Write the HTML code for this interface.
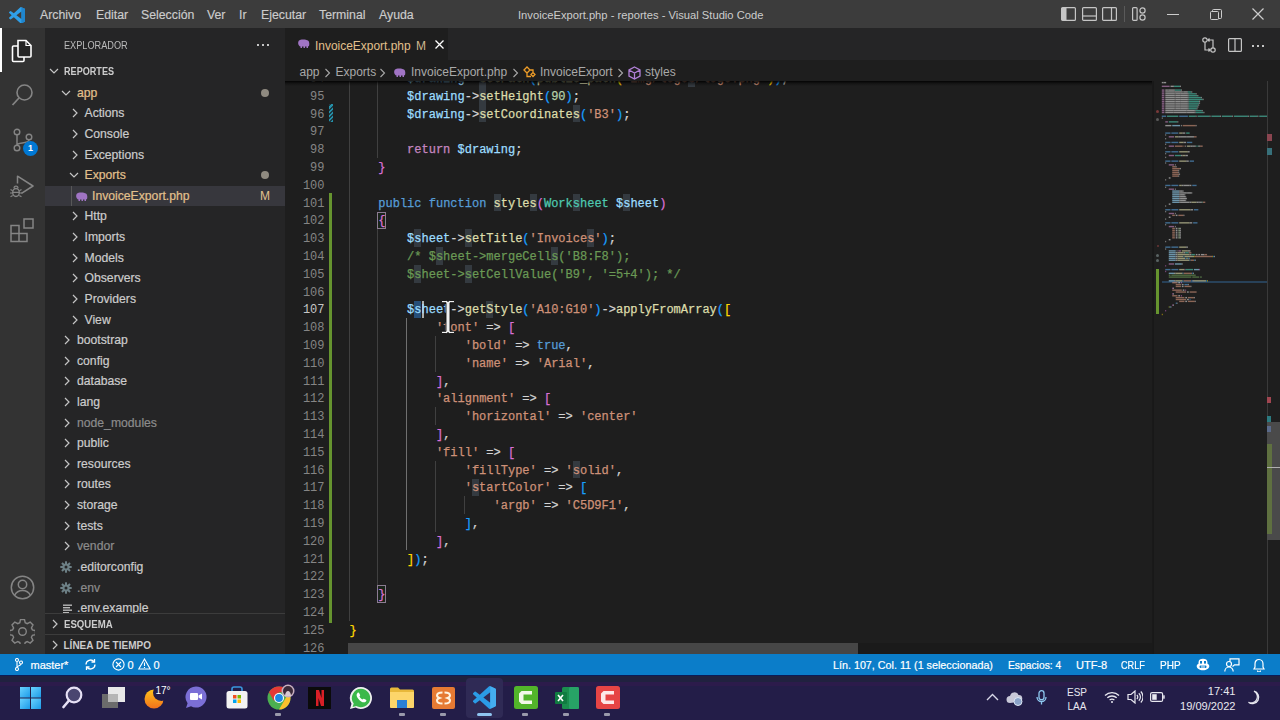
<!DOCTYPE html>
<html><head><meta charset="utf-8">
<style>
*{margin:0;padding:0;box-sizing:border-box}
html,body{width:1280px;height:720px;overflow:hidden;background:#1e1e1e;font-family:"Liberation Sans",sans-serif;color:#cccccc}
.abs{position:absolute}
svg{display:block}
#title{position:absolute;left:0;top:0;width:1280px;height:28px;background:#3c3c3c}
#title .m{position:absolute;top:1px;height:28px;line-height:28px;font-size:12.3px;color:#cccccc;-webkit-text-stroke:0.15px currentColor}
#title .tt{position:absolute;top:1px;height:28px;line-height:28px;font-size:11.2px;color:#cccccc;left:518px}
#act{position:absolute;left:0;top:28px;width:45px;height:626px;background:#333333}
#side{position:absolute;left:45px;top:28px;width:240px;height:626px;background:#252526;overflow:hidden}
.row{position:absolute;left:0;width:240px;height:20.57px}
.row.sel{background:#37373d}
.rt{position:absolute;top:0;line-height:20.57px;font-size:12.2px;color:#cccccc;white-space:nowrap;-webkit-text-stroke:0.2px currentColor}
.rt.mod{color:#e2c08d}
.rt.ign{color:#8c8c8c}
.ico{position:absolute}
.iguide{position:absolute;top:0;width:1px;height:20.57px;background:#585858}
.mdot{position:absolute;left:216px;top:6.3px;width:8px;height:8px;border-radius:50%;background:#8f8a80}
.mbadge{position:absolute;left:215px;top:0;line-height:20.57px;font-size:12px;color:#e2c08d}
#editor{position:absolute;left:285px;top:28px;width:995px;height:626px;background:#1e1e1e}
#tabs{position:absolute;left:0;top:0;width:995px;height:32px;background:#252526}
#tab{position:absolute;left:0;top:0;width:163px;height:32px;background:#1e1e1e}
#crumbs{position:absolute;left:0;top:33.5px;width:995px;height:21px;font-size:12px;color:#a9a9a9}
#code{position:absolute;left:0;top:53px;width:868px;height:573px;overflow:hidden}
.ln{position:absolute;left:64.5px;height:17.8px;line-height:17.8px;font-family:"Liberation Mono",monospace;font-size:12px;white-space:pre;color:#d4d4d4;-webkit-text-stroke:0.25px currentColor}
.num{position:absolute;left:0;width:39.5px;text-align:right;height:17.8px;line-height:17.8px;font-family:"Liberation Mono",monospace;font-size:12px;color:#858585}
.num.act{color:#c6c6c6}
.v{color:#9cdcfe}.o{color:#d4d4d4}.f{color:#dcdcaa}.s{color:#ce9178}.n{color:#b5cea8}.k{color:#c586c0}.b{color:#569cd6}.t{color:#4ec9b0}.c{color:#6a9955}
.p1{color:#ffd700}.p2{color:#da70d6}.p3{color:#179fff}
.guide{position:absolute;width:1px;background:#404040}
.hl{position:absolute;width:7.2px;height:17.8px;background:#343a40}
.selx{position:absolute;width:7.2px;height:17.8px;background:#264f78}
.bm{position:absolute;width:8.5px;height:17.8px;border:1px solid #8c7c92;background:#0064001a}
.cur{position:absolute;width:2px;height:17.8px;background:#aeafad}
.gact{background:#707070}
#status{position:absolute;left:0;top:654px;width:1280px;height:21px;background:#0b7dc9;color:#ffffff;font-size:11px}
#status .si{position:absolute;top:0.5px;line-height:21px;white-space:nowrap;-webkit-text-stroke:0.2px #fff}
#taskbar{position:absolute;left:0;top:675px;width:1280px;height:45px;background:#231d48}
</style></head><body>

<div id="title">
  <svg class="abs" style="left:8.5px;top:6.5px" width="16.5" height="16.5" viewBox="0 0 24 24"><path d="M23.15 2.587L18.21.21a1.494 1.494 0 0 0-1.705.29l-9.46 8.63-4.12-3.128a.999.999 0 0 0-1.276.057L.327 7.261A1 1 0 0 0 .326 8.74L3.899 12 .326 15.26a1 1 0 0 0 .001 1.479L1.65 17.94a.999.999 0 0 0 1.276.057l4.12-3.128 9.46 8.63a1.492 1.492 0 0 0 1.704.29l4.942-2.377A1.5 1.5 0 0 0 24 20.06V3.939a1.5 1.5 0 0 0-.85-1.352zm-5.146 14.861L10.826 12l7.178-5.448v10.896z" fill="#2f9fe8"/><path d="M18.004 0.3l5.146 2.287A1.5 1.5 0 0 1 24 3.939V20.06a1.5 1.5 0 0 1-.85 1.353l-5.146 2.287z" fill="#1b7cc4" opacity="0.75"/></svg>
  <div class="m" style="left:40px">Archivo</div>
  <div class="m" style="left:96px">Editar</div>
  <div class="m" style="left:141px">Selección</div>
  <div class="m" style="left:207px">Ver</div>
  <div class="m" style="left:239px">Ir</div>
  <div class="m" style="left:261px">Ejecutar</div>
  <div class="m" style="left:319px">Terminal</div>
  <div class="m" style="left:379px">Ayuda</div>
  <div class="tt">InvoiceExport.php - reportes - Visual Studio Code</div>
  <!-- layout icons -->
  <svg class="abs" style="left:1061px;top:7px" width="15" height="14" viewBox="0 0 15 14"><rect x="0.6" y="0.6" width="13.8" height="12.8" rx="1" fill="none" stroke="#c5c5c5" stroke-width="1.2"/><rect x="1" y="1" width="4.5" height="12" fill="#c5c5c5"/></svg>
  <svg class="abs" style="left:1082px;top:7px" width="15" height="14" viewBox="0 0 15 14"><rect x="0.6" y="0.6" width="13.8" height="12.8" rx="1" fill="none" stroke="#c5c5c5" stroke-width="1.2"/><line x1="1" y1="9" x2="14" y2="9" stroke="#c5c5c5" stroke-width="1.2"/></svg>
  <svg class="abs" style="left:1102px;top:7px" width="15" height="14" viewBox="0 0 15 14"><rect x="0.6" y="0.6" width="13.8" height="12.8" rx="1" fill="none" stroke="#c5c5c5" stroke-width="1.2"/><line x1="9.5" y1="1" x2="9.5" y2="13" stroke="#c5c5c5" stroke-width="1.2"/></svg>
  <div class="abs" style="left:1124px;top:6px;width:1px;height:16px;background:#5a5a5a"></div>
  <svg class="abs" style="left:1132px;top:7px" width="15" height="14" viewBox="0 0 15 14"><rect x="0.6" y="0.6" width="4.5" height="12.8" rx="1" fill="none" stroke="#c5c5c5" stroke-width="1.2"/><circle cx="10.5" cy="3.5" r="2.6" fill="none" stroke="#c5c5c5" stroke-width="1.2"/><circle cx="10.5" cy="10.5" r="2.6" fill="none" stroke="#c5c5c5" stroke-width="1.2"/></svg>
  <div class="abs" style="left:1167px;top:14px;width:12px;height:1px;background:#cccccc"></div>
  <svg class="abs" style="left:1210px;top:9px" width="12" height="11" viewBox="0 0 12 11"><rect x="0.5" y="2.5" width="8" height="8" rx="1" fill="none" stroke="#cccccc"/><path d="M2.5 2.5V1.5a1 1 0 0 1 1-1h7a1 1 0 0 1 1 1v7a1 1 0 0 1-1 1h-2" fill="none" stroke="#cccccc"/></svg>
  <svg class="abs" style="left:1252px;top:8px" width="12" height="12" viewBox="0 0 12 12"><path d="M0.5 0.5L11.5 11.5M11.5 0.5L0.5 11.5" stroke="#cccccc" stroke-width="1.2"/></svg>
</div>

<div id="act">
  <div class="abs" style="left:0;top:0;width:2px;height:44px;background:#ffffff"></div>
  <!-- explorer -->
  <svg class="abs" style="left:11px;top:11px" width="22" height="24" viewBox="0 0 22 24"><path d="M7 7H2.5a1 1 0 0 0-1 1v13.5a1 1 0 0 0 1 1H12a1 1 0 0 0 1-1V18" fill="#282828" stroke="#ffffff" stroke-width="1.6"/><path d="M7 1.5h8l5 5V17a1 1 0 0 1-1 1H8a1 1 0 0 1-1-1z" fill="#262626" stroke="#ffffff" stroke-width="1.6"/><path d="M15 1.5V6.5h5" fill="none" stroke="#ffffff" stroke-width="1.2"/></svg>
  <!-- search -->
  <svg class="abs" style="left:11px;top:55px" width="23" height="24" viewBox="0 0 23 24"><circle cx="13.5" cy="9.5" r="7.5" fill="none" stroke="#858585" stroke-width="1.6"/><path d="M8 15L1.5 22" stroke="#858585" stroke-width="1.8"/></svg>
  <!-- scm -->
  <svg class="abs" style="left:12px;top:100px" width="22" height="24" viewBox="0 0 22 24"><circle cx="5" cy="4" r="2.8" fill="none" stroke="#858585" stroke-width="1.4"/><circle cx="5" cy="20" r="2.8" fill="none" stroke="#858585" stroke-width="1.4"/><circle cx="17" cy="9" r="2.8" fill="none" stroke="#858585" stroke-width="1.4"/><path d="M5 7V17M17 12c0 4-12 2-12 5" fill="none" stroke="#858585" stroke-width="1.4"/></svg>
  <div class="abs" style="left:23px;top:113px;width:15px;height:15px;border-radius:50%;background:#0078d4;color:#fff;font-size:9px;font-weight:bold;line-height:15px;text-align:center">1</div>
  <!-- run debug -->
  <svg class="abs" style="left:9px;top:146px" width="26" height="25" viewBox="0 0 26 25"><path d="M8.5 9.5V2.2L24 12L12.5 19.3" fill="none" stroke="#858585" stroke-width="1.5" stroke-linejoin="round"/><ellipse cx="7" cy="18.5" rx="3.3" ry="4" fill="none" stroke="#858585" stroke-width="1.4"/><path d="M5 14.2a2 2 0 0 1 4 0M1.5 15.5l2.2 1.2M12.5 15.5l-2.2 1.2M1 19h2.7M13 19h-2.7M1.5 22.8l2.2-1.3M12.5 22.8l-2.2-1.3M3.8 18.3h6.4" fill="none" stroke="#858585" stroke-width="1.2"/></svg>
  <!-- extensions -->
  <svg class="abs" style="left:10px;top:190px" width="24" height="25" viewBox="0 0 24 25"><path d="M1 7.5h8v16H1zM1 15.5h16v8H9" fill="none" stroke="#858585" stroke-width="1.5"/><rect x="14" y="1" width="9" height="9" fill="none" stroke="#858585" stroke-width="1.5"/></svg>
  <!-- account -->
  <svg class="abs" style="left:10px;top:547px" width="25" height="25" viewBox="0 0 25 25"><circle cx="12.5" cy="12.5" r="11.2" fill="none" stroke="#858585" stroke-width="1.5"/><circle cx="12.5" cy="9.5" r="4.2" fill="none" stroke="#858585" stroke-width="1.5"/><path d="M4.5 20.5c2-4 4.5-5 8-5s6 1 8 5" fill="none" stroke="#858585" stroke-width="1.5"/></svg>
  <!-- settings -->
  <svg class="abs" style="left:10px;top:591px" width="25" height="25" viewBox="0 0 25 25"><path d="M10.5 1.5h4l.7 3.2 2 1 3-1.6 2.8 2.8-1.6 3 1 2 3.1.7v4l-3.1.7-1 2 1.6 3-2.8 2.8-3-1.6-2 1-.7 3.1h-4l-.7-3.1-2-1-3 1.6-2.8-2.8 1.6-3-1-2-3.2-.7v-4l3.2-.7 1-2-1.6-3 2.8-2.8 3 1.6 2-1z" fill="none" stroke="#858585" stroke-width="1.4" transform="translate(0 -1)"/><circle cx="12.5" cy="12.5" r="3.8" fill="none" stroke="#858585" stroke-width="1.4"/></svg>
</div>

<div id="side">
  <div class="abs" style="left:19px;top:0.7px;height:34px;line-height:34px;font-size:10px;color:#bbbbbb;transform:scaleX(0.917);transform-origin:left">EXPLORADOR</div>
  <div class="abs" style="left:212px;top:16px;width:2px;height:2px;background:#c5c5c5;box-shadow:5px 0 #c5c5c5,10px 0 #c5c5c5"></div>
  <svg class="abs" style="left:4px;top:39px" width="10" height="8" viewBox="0 0 10 8"><path d="M1 2l4 4 4-4" fill="none" stroke="#c5c5c5" stroke-width="1.2"/></svg>
  <div class="abs" style="left:19px;top:33.5px;height:20px;line-height:20px;font-size:10px;font-weight:bold;color:#cccccc;transform:scaleX(0.909);transform-origin:left">REPORTES</div>
<div class="row" style="top:54.69px">
<div class="ico" style="left:16.0px;top:6px"><svg width="10" height="8" viewBox="0 0 10 8"><path d="M1 2l4 4 4-4" fill="none" stroke="#c5c5c5" stroke-width="1.2"/></svg></div>
<div class="rt mod" style="left:32.0px">app</div>
<div class="mdot"></div>
</div>
<div class="row" style="top:75.31px">
<div class="ico" style="left:25.5px;top:5px"><svg width="8" height="10" viewBox="0 0 8 10"><path d="M2 1l4 4-4 4" fill="none" stroke="#c5c5c5" stroke-width="1.2"/></svg></div>
<div class="rt " style="left:39.5px">Actions</div>
</div>
<div class="row" style="top:95.93px">
<div class="ico" style="left:25.5px;top:5px"><svg width="8" height="10" viewBox="0 0 8 10"><path d="M2 1l4 4-4 4" fill="none" stroke="#c5c5c5" stroke-width="1.2"/></svg></div>
<div class="rt " style="left:39.5px">Console</div>
</div>
<div class="row" style="top:116.55px">
<div class="ico" style="left:25.5px;top:5px"><svg width="8" height="10" viewBox="0 0 8 10"><path d="M2 1l4 4-4 4" fill="none" stroke="#c5c5c5" stroke-width="1.2"/></svg></div>
<div class="rt " style="left:39.5px">Exceptions</div>
</div>
<div class="row" style="top:137.17px">
<div class="ico" style="left:23.5px;top:6px"><svg width="10" height="8" viewBox="0 0 10 8"><path d="M1 2l4 4 4-4" fill="none" stroke="#c5c5c5" stroke-width="1.2"/></svg></div>
<div class="rt mod" style="left:39.5px">Exports</div>
<div class="mdot"></div>
</div>
<div class="row sel" style="top:157.79px">
<div class="ico" style="left:29.5px;top:6px"><svg width="13" height="9" viewBox="0 0 13 9"><path d="M2 1.5C3 0 9 0 11 1.5c1.5 1 1.5 4 1 5.5l-1 .5V9H9.5V7.5H8V9H6.5V7.5H5V9H3.5V7.5C1 7 .5 3 2 1.5z" fill="#a074c4"/></svg></div>
<div class="iguide" style="left:26px"></div>
<div class="rt mod" style="left:47.0px">InvoiceExport.php</div>
<div class="mbadge">M</div>
</div>
<div class="row" style="top:178.41px">
<div class="ico" style="left:25.5px;top:5px"><svg width="8" height="10" viewBox="0 0 8 10"><path d="M2 1l4 4-4 4" fill="none" stroke="#c5c5c5" stroke-width="1.2"/></svg></div>
<div class="rt " style="left:39.5px">Http</div>
</div>
<div class="row" style="top:199.03px">
<div class="ico" style="left:25.5px;top:5px"><svg width="8" height="10" viewBox="0 0 8 10"><path d="M2 1l4 4-4 4" fill="none" stroke="#c5c5c5" stroke-width="1.2"/></svg></div>
<div class="rt " style="left:39.5px">Imports</div>
</div>
<div class="row" style="top:219.65px">
<div class="ico" style="left:25.5px;top:5px"><svg width="8" height="10" viewBox="0 0 8 10"><path d="M2 1l4 4-4 4" fill="none" stroke="#c5c5c5" stroke-width="1.2"/></svg></div>
<div class="rt " style="left:39.5px">Models</div>
</div>
<div class="row" style="top:240.27px">
<div class="ico" style="left:25.5px;top:5px"><svg width="8" height="10" viewBox="0 0 8 10"><path d="M2 1l4 4-4 4" fill="none" stroke="#c5c5c5" stroke-width="1.2"/></svg></div>
<div class="rt " style="left:39.5px">Observers</div>
</div>
<div class="row" style="top:260.89px">
<div class="ico" style="left:25.5px;top:5px"><svg width="8" height="10" viewBox="0 0 8 10"><path d="M2 1l4 4-4 4" fill="none" stroke="#c5c5c5" stroke-width="1.2"/></svg></div>
<div class="rt " style="left:39.5px">Providers</div>
</div>
<div class="row" style="top:281.51px">
<div class="ico" style="left:25.5px;top:5px"><svg width="8" height="10" viewBox="0 0 8 10"><path d="M2 1l4 4-4 4" fill="none" stroke="#c5c5c5" stroke-width="1.2"/></svg></div>
<div class="rt " style="left:39.5px">View</div>
</div>
<div class="row" style="top:302.13px">
<div class="ico" style="left:18.0px;top:5px"><svg width="8" height="10" viewBox="0 0 8 10"><path d="M2 1l4 4-4 4" fill="none" stroke="#c5c5c5" stroke-width="1.2"/></svg></div>
<div class="rt " style="left:32.0px">bootstrap</div>
</div>
<div class="row" style="top:322.75px">
<div class="ico" style="left:18.0px;top:5px"><svg width="8" height="10" viewBox="0 0 8 10"><path d="M2 1l4 4-4 4" fill="none" stroke="#c5c5c5" stroke-width="1.2"/></svg></div>
<div class="rt " style="left:32.0px">config</div>
</div>
<div class="row" style="top:343.37px">
<div class="ico" style="left:18.0px;top:5px"><svg width="8" height="10" viewBox="0 0 8 10"><path d="M2 1l4 4-4 4" fill="none" stroke="#c5c5c5" stroke-width="1.2"/></svg></div>
<div class="rt " style="left:32.0px">database</div>
</div>
<div class="row" style="top:363.99px">
<div class="ico" style="left:18.0px;top:5px"><svg width="8" height="10" viewBox="0 0 8 10"><path d="M2 1l4 4-4 4" fill="none" stroke="#c5c5c5" stroke-width="1.2"/></svg></div>
<div class="rt " style="left:32.0px">lang</div>
</div>
<div class="row" style="top:384.61px">
<div class="ico" style="left:18.0px;top:5px"><svg width="8" height="10" viewBox="0 0 8 10"><path d="M2 1l4 4-4 4" fill="none" stroke="#c5c5c5" stroke-width="1.2"/></svg></div>
<div class="rt ign" style="left:32.0px">node_modules</div>
</div>
<div class="row" style="top:405.23px">
<div class="ico" style="left:18.0px;top:5px"><svg width="8" height="10" viewBox="0 0 8 10"><path d="M2 1l4 4-4 4" fill="none" stroke="#c5c5c5" stroke-width="1.2"/></svg></div>
<div class="rt " style="left:32.0px">public</div>
</div>
<div class="row" style="top:425.85px">
<div class="ico" style="left:18.0px;top:5px"><svg width="8" height="10" viewBox="0 0 8 10"><path d="M2 1l4 4-4 4" fill="none" stroke="#c5c5c5" stroke-width="1.2"/></svg></div>
<div class="rt " style="left:32.0px">resources</div>
</div>
<div class="row" style="top:446.47px">
<div class="ico" style="left:18.0px;top:5px"><svg width="8" height="10" viewBox="0 0 8 10"><path d="M2 1l4 4-4 4" fill="none" stroke="#c5c5c5" stroke-width="1.2"/></svg></div>
<div class="rt " style="left:32.0px">routes</div>
</div>
<div class="row" style="top:467.09px">
<div class="ico" style="left:18.0px;top:5px"><svg width="8" height="10" viewBox="0 0 8 10"><path d="M2 1l4 4-4 4" fill="none" stroke="#c5c5c5" stroke-width="1.2"/></svg></div>
<div class="rt " style="left:32.0px">storage</div>
</div>
<div class="row" style="top:487.71px">
<div class="ico" style="left:18.0px;top:5px"><svg width="8" height="10" viewBox="0 0 8 10"><path d="M2 1l4 4-4 4" fill="none" stroke="#c5c5c5" stroke-width="1.2"/></svg></div>
<div class="rt " style="left:32.0px">tests</div>
</div>
<div class="row" style="top:508.33px">
<div class="ico" style="left:18.0px;top:5px"><svg width="8" height="10" viewBox="0 0 8 10"><path d="M2 1l4 4-4 4" fill="none" stroke="#c5c5c5" stroke-width="1.2"/></svg></div>
<div class="rt ign" style="left:32.0px">vendor</div>
</div>
<div class="row" style="top:528.95px">
<div class="ico" style="left:14.5px;top:4.5px"><svg width="12" height="12" viewBox="0 0 12 12"><g fill="#6d8086"><circle cx="6" cy="6" r="3.6"/><rect x="5" y="0.3" width="2" height="11.4"/><rect x="0.3" y="5" width="11.4" height="2"/><rect x="5" y="0.3" width="2" height="11.4" transform="rotate(45 6 6)"/><rect x="5" y="0.3" width="2" height="11.4" transform="rotate(-45 6 6)"/></g><circle cx="6" cy="6" r="1.5" fill="#252526"/></svg></div>
<div class="rt " style="left:32.0px">.editorconfig</div>
</div>
<div class="row" style="top:549.57px">
<div class="ico" style="left:14.5px;top:4.5px"><svg width="12" height="12" viewBox="0 0 12 12"><g fill="#6d8086"><circle cx="6" cy="6" r="3.6"/><rect x="5" y="0.3" width="2" height="11.4"/><rect x="0.3" y="5" width="11.4" height="2"/><rect x="5" y="0.3" width="2" height="11.4" transform="rotate(45 6 6)"/><rect x="5" y="0.3" width="2" height="11.4" transform="rotate(-45 6 6)"/></g><circle cx="6" cy="6" r="1.5" fill="#252526"/></svg></div>
<div class="rt ign" style="left:32.0px">.env</div>
</div>
<div class="row" style="top:570.19px">
<div class="ico" style="left:18.0px;top:5.5px"><svg width="10" height="10" viewBox="0 0 10 10"><g fill="#b8b8b8"><rect x="0" y="0.5" width="9" height="1.4"/><rect x="0" y="3" width="7" height="1.4"/><rect x="0" y="5.5" width="9" height="1.4"/><rect x="0" y="8" width="6" height="1.4"/></g></svg></div>
<div class="rt " style="left:32.0px">.env.example</div>
</div>
  <div class="abs" style="left:0;top:585px;width:240px;height:21px;background:#252526;border-top:1px solid #3c3c3c"></div>
  <svg class="abs" style="left:6px;top:591px" width="8" height="10" viewBox="0 0 8 10"><path d="M2 1l4 4-4 4" fill="none" stroke="#c5c5c5" stroke-width="1.2"/></svg>
  <div class="abs" style="left:18.5px;top:587px;height:20px;line-height:20px;font-size:10px;font-weight:bold;color:#cccccc;transform:scaleX(0.963);transform-origin:left">ESQUEMA</div>
  <div class="abs" style="left:0;top:606px;width:240px;height:20px;background:#252526;border-top:1px solid #3c3c3c"></div>
  <svg class="abs" style="left:6px;top:612px" width="8" height="10" viewBox="0 0 8 10"><path d="M2 1l4 4-4 4" fill="none" stroke="#c5c5c5" stroke-width="1.2"/></svg>
  <div class="abs" style="left:18.5px;top:608px;height:20px;line-height:20px;font-size:10px;font-weight:bold;color:#cccccc">LÍNEA DE TIEMPO</div>
</div>

<div id="editor">
  <div id="tabs">
    <div id="tab">
      <svg class="abs" style="left:12px;top:11px" width="13" height="9" viewBox="0 0 13 9"><path d="M2 1.5C3 0 9 0 11 1.5c1.5 1 1.5 4 1 5.5l-1 .5V9H9.5V7.5H8V9H6.5V7.5H5V9H3.5V7.5C1 7 .5 3 2 1.5z" fill="#a074c4"/></svg>
      <div class="abs" style="left:30px;top:1.5px;line-height:32px;font-size:11.95px;color:#e2c08d">InvoiceExport.php</div>
      <div class="abs" style="left:131px;top:1.5px;line-height:32px;font-size:12px;color:#cdb78e">M</div>
      <svg class="abs" style="left:150px;top:12px" width="9" height="9" viewBox="0 0 9 9"><path d="M0.5 0.5L8.5 8.5M8.5 0.5L0.5 8.5" stroke="#ffffff" stroke-width="1.3"/></svg>
    </div>
    <!-- editor actions -->
    <svg class="abs" style="left:917px;top:9px" width="14" height="16" viewBox="0 0 14 16"><circle cx="3" cy="3" r="2.2" fill="none" stroke="#c5c5c5" stroke-width="1.2"/><circle cx="11" cy="13" r="2.2" fill="none" stroke="#c5c5c5" stroke-width="1.2"/><path d="M3 5.2V13h5M6.5 11.5L8 13l-1.5 1.5M11 10.8V3H6M7.5 1.5L6 3l1.5 1.5" fill="none" stroke="#c5c5c5" stroke-width="1.2"/></svg>
    <svg class="abs" style="left:943px;top:10px" width="14" height="14" viewBox="0 0 14 14"><rect x="0.6" y="0.6" width="12.8" height="12.8" rx="1" fill="none" stroke="#c5c5c5" stroke-width="1.2"/><line x1="7" y1="1" x2="7" y2="13" stroke="#c5c5c5" stroke-width="1.2"/></svg>
    <div class="abs" style="left:967px;top:17px;width:2px;height:2px;background:#c5c5c5;box-shadow:5px 0 #c5c5c5,10px 0 #c5c5c5"></div>
  </div>
  <div id="crumbs">
    <div class="abs" style="left:14.5px;top:0;line-height:21px">app</div>
    <svg class="abs" style="left:39px;top:6px" width="7" height="10" viewBox="0 0 7 10"><path d="M1.5 1l4 4-4 4" fill="none" stroke="#a9a9a9" stroke-width="1.1"/></svg>
    <div class="abs" style="left:50.5px;top:0;line-height:21px">Exports</div>
    <svg class="abs" style="left:94px;top:6px" width="7" height="10" viewBox="0 0 7 10"><path d="M1.5 1l4 4-4 4" fill="none" stroke="#a9a9a9" stroke-width="1.1"/></svg>
    <svg class="abs" style="left:108px;top:6px" width="13" height="9" viewBox="0 0 13 9"><path d="M2 1.5C3 0 9 0 11 1.5c1.5 1 1.5 4 1 5.5l-1 .5V9H9.5V7.5H8V9H6.5V7.5H5V9H3.5V7.5C1 7 .5 3 2 1.5z" fill="#a074c4"/></svg>
    <div class="abs" style="left:126px;top:0;line-height:21px">InvoiceExport.php</div>
    <svg class="abs" style="left:227px;top:6px" width="7" height="10" viewBox="0 0 7 10"><path d="M1.5 1l4 4-4 4" fill="none" stroke="#a9a9a9" stroke-width="1.1"/></svg>
    <svg class="abs" style="left:238px;top:4px" width="13" height="13" viewBox="0 0 13 13"><path d="M1 4l3-3 3 3-3 3zM8 8.5l2-2 2 2-2 2zM4 7v3.5h4M7 4h3v2.5" fill="none" stroke="#ee9d28" stroke-width="1.3"/></svg>
    <div class="abs" style="left:255px;top:0;line-height:21px">InvoiceExport</div>
    <svg class="abs" style="left:332px;top:6px" width="7" height="10" viewBox="0 0 7 10"><path d="M1.5 1l4 4-4 4" fill="none" stroke="#a9a9a9" stroke-width="1.1"/></svg>
    <svg class="abs" style="left:343px;top:4px" width="13" height="14" viewBox="0 0 13 14"><path d="M6.5 1L12 4v6l-5.5 3L1 10V4zM1 4l5.5 3L12 4M6.5 7v6" fill="none" stroke="#b180d7" stroke-width="1.3"/></svg>
    <div class="abs" style="left:360px;top:0;line-height:21px">styles</div>
  </div>
  <div id="code">
<div class="guide" style="left:63.5px;top:-11.9px;height:551.8px"></div>
<div class="guide" style="left:92.3px;top:-11.9px;height:89.0px"></div>
<div class="guide" style="left:92.3px;top:148.3px;height:356.0px"></div>
<div class="guide gact" style="left:121.1px;top:237.3px;height:231.4px"></div>
<div class="guide" style="left:149.9px;top:255.1px;height:35.6px"></div>
<div class="guide" style="left:149.9px;top:326.3px;height:17.8px"></div>
<div class="guide" style="left:149.9px;top:379.7px;height:71.2px"></div>
<div class="guide" style="left:178.7px;top:415.3px;height:17.8px"></div>
<div class="hl" style="left:194.10px;top:-11.90px"></div>
<div class="hl" style="left:402.90px;top:-11.90px"></div>
<div class="hl" style="left:194.10px;top:5.90px"></div>
<div class="hl" style="left:194.10px;top:23.70px"></div>
<div class="hl" style="left:287.70px;top:23.70px"></div>
<div class="hl" style="left:208.50px;top:112.70px"></div>
<div class="hl" style="left:244.50px;top:112.70px"></div>
<div class="hl" style="left:287.70px;top:112.70px"></div>
<div class="hl" style="left:338.10px;top:112.70px"></div>
<div class="hl" style="left:129.30px;top:148.30px"></div>
<div class="hl" style="left:179.70px;top:148.30px"></div>
<div class="hl" style="left:302.10px;top:148.30px"></div>
<div class="hl" style="left:150.90px;top:166.10px"></div>
<div class="hl" style="left:266.10px;top:166.10px"></div>
<div class="hl" style="left:129.30px;top:183.90px"></div>
<div class="hl" style="left:179.70px;top:183.90px"></div>
<div class="selx" style="left:129.30px;top:219.50px"></div>
<div class="hl" style="left:201.30px;top:219.50px"></div>
<div class="hl" style="left:287.70px;top:379.70px"></div>
<div class="hl" style="left:186.90px;top:397.50px"></div>
<div class="bm" style="left:92.30px;top:130.50px"></div>
<div class="bm" style="left:92.30px;top:504.30px"></div>
<div class="cur" style="left:136.50px;top:219.50px"></div>
<div class="ln" style="top:-10.00px">        <span class="v">$drawing</span><span class="o">-&gt;</span><span class="f">setPath</span><span class="p3">(</span><span class="f">public_path</span><span class="p1">(</span><span class="s">&#x27;img/logos/logo.png&#x27;</span><span class="p1">)</span><span class="p3">)</span><span class="o">;</span></div>
<div class="num" style="top:-10.00px">94</div>
<div class="ln" style="top:7.80px">        <span class="v">$drawing</span><span class="o">-&gt;</span><span class="f">setHeight</span><span class="p3">(</span><span class="n">90</span><span class="p3">)</span><span class="o">;</span></div>
<div class="num" style="top:7.80px">95</div>
<div class="ln" style="top:25.60px">        <span class="v">$drawing</span><span class="o">-&gt;</span><span class="f">setCoordinates</span><span class="p3">(</span><span class="s">&#x27;B3&#x27;</span><span class="p3">)</span><span class="o">;</span></div>
<div class="num" style="top:25.60px">96</div>
<div class="ln" style="top:43.40px"></div>
<div class="num" style="top:43.40px">97</div>
<div class="ln" style="top:61.20px">        <span class="k">return</span> <span class="v">$drawing</span><span class="o">;</span></div>
<div class="num" style="top:61.20px">98</div>
<div class="ln" style="top:79.00px">    <span class="p2">}</span></div>
<div class="num" style="top:79.00px">99</div>
<div class="ln" style="top:96.80px"></div>
<div class="num" style="top:96.80px">100</div>
<div class="ln" style="top:114.60px">    <span class="b">public</span> <span class="b">function</span> <span class="f">styles</span><span class="p2">(</span><span class="t">Worksheet</span> <span class="v">$sheet</span><span class="p2">)</span></div>
<div class="num" style="top:114.60px">101</div>
<div class="ln" style="top:132.40px">    <span class="p2">{</span></div>
<div class="num" style="top:132.40px">102</div>
<div class="ln" style="top:150.20px">        <span class="v">$sheet</span><span class="o">-&gt;</span><span class="f">setTitle</span><span class="p3">(</span><span class="s">&#x27;Invoices&#x27;</span><span class="p3">)</span><span class="o">;</span></div>
<div class="num" style="top:150.20px">103</div>
<div class="ln" style="top:168.00px">        <span class="c">/* $sheet-&gt;mergeCells(&#x27;B8:F8&#x27;);</span></div>
<div class="num" style="top:168.00px">104</div>
<div class="ln" style="top:185.80px">        <span class="c">$sheet-&gt;setCellValue(&#x27;B9&#x27;, &#x27;=5+4&#x27;); */</span></div>
<div class="num" style="top:185.80px">105</div>
<div class="ln" style="top:203.60px"></div>
<div class="num" style="top:203.60px">106</div>
<div class="ln" style="top:221.40px">        <span class="v">$sheet</span><span class="o">-&gt;</span><span class="f">getStyle</span><span class="p3">(</span><span class="s">&#x27;A10:G10&#x27;</span><span class="p3">)</span><span class="o">-&gt;</span><span class="f">applyFromArray</span><span class="p3">(</span><span class="p1">[</span></div>
<div class="num act" style="top:221.40px">107</div>
<div class="ln" style="top:239.20px">            <span class="s">&#x27;font&#x27;</span><span class="o"> =&gt; </span><span class="p2">[</span></div>
<div class="num" style="top:239.20px">108</div>
<div class="ln" style="top:257.00px">                <span class="s">&#x27;bold&#x27;</span><span class="o"> =&gt; </span><span class="b">true</span><span class="o">,</span></div>
<div class="num" style="top:257.00px">109</div>
<div class="ln" style="top:274.80px">                <span class="s">&#x27;name&#x27;</span><span class="o"> =&gt; </span><span class="s">&#x27;Arial&#x27;</span><span class="o">,</span></div>
<div class="num" style="top:274.80px">110</div>
<div class="ln" style="top:292.60px">            <span class="p2">]</span><span class="o">,</span></div>
<div class="num" style="top:292.60px">111</div>
<div class="ln" style="top:310.40px">            <span class="s">&#x27;alignment&#x27;</span><span class="o"> =&gt; </span><span class="p2">[</span></div>
<div class="num" style="top:310.40px">112</div>
<div class="ln" style="top:328.20px">                <span class="s">&#x27;horizontal&#x27;</span><span class="o"> =&gt; </span><span class="s">&#x27;center&#x27;</span></div>
<div class="num" style="top:328.20px">113</div>
<div class="ln" style="top:346.00px">            <span class="p2">]</span><span class="o">,</span></div>
<div class="num" style="top:346.00px">114</div>
<div class="ln" style="top:363.80px">            <span class="s">&#x27;fill&#x27;</span><span class="o"> =&gt; </span><span class="p2">[</span></div>
<div class="num" style="top:363.80px">115</div>
<div class="ln" style="top:381.60px">                <span class="s">&#x27;fillType&#x27;</span><span class="o"> =&gt; </span><span class="s">&#x27;solid&#x27;</span><span class="o">,</span></div>
<div class="num" style="top:381.60px">116</div>
<div class="ln" style="top:399.40px">                <span class="s">&#x27;startColor&#x27;</span><span class="o"> =&gt; </span><span class="p3">[</span></div>
<div class="num" style="top:399.40px">117</div>
<div class="ln" style="top:417.20px">                    <span class="s">&#x27;argb&#x27;</span><span class="o"> =&gt; </span><span class="s">&#x27;C5D9F1&#x27;</span><span class="o">,</span></div>
<div class="num" style="top:417.20px">118</div>
<div class="ln" style="top:435.00px">                <span class="p3">]</span><span class="o">,</span></div>
<div class="num" style="top:435.00px">119</div>
<div class="ln" style="top:452.80px">            <span class="p2">]</span><span class="o">,</span></div>
<div class="num" style="top:452.80px">120</div>
<div class="ln" style="top:470.60px">        <span class="p1">]</span><span class="p3">)</span><span class="o">;</span></div>
<div class="num" style="top:470.60px">121</div>
<div class="ln" style="top:488.40px"></div>
<div class="num" style="top:488.40px">122</div>
<div class="ln" style="top:506.20px">    <span class="p2">}</span></div>
<div class="num" style="top:506.20px">123</div>
<div class="ln" style="top:524.00px"></div>
<div class="num" style="top:524.00px">124</div>
<div class="ln" style="top:541.80px"><span class="p1">}</span></div>
<div class="num" style="top:541.80px">125</div>
<div class="ln" style="top:559.60px"></div>
<div class="num" style="top:559.60px">126</div>
  </div>
  <svg class="abs" style="left:155px;top:271px" width="16" height="36" viewBox="0 0 16 36"><path d="M1.5 1.5h5.2l1.3 1 1.3-1h5.2v2.2H10v28.6h4.5v2.2H9.3l-1.3-1-1.3 1H1.5v-2.2H6V3.7H1.5z" fill="#f0f0f0" stroke="#111" stroke-width="0.9"/></svg>
  <!-- scroll shadow -->
  <div class="abs" style="left:0;top:53px;width:868px;height:5px;background:linear-gradient(rgba(0,0,0,.9),rgba(0,0,0,.35) 45%,rgba(0,0,0,0))"></div>
  <!-- gutter git markers -->
  <div class="abs" style="left:43.5px;top:76px;width:4px;height:18px;background:repeating-linear-gradient(-45deg,#2590a8 0 1.6px,#1e3a44 1.6px 3px)"></div>
  <div class="abs" style="left:43.75px;top:165px;width:3.3px;height:430px;background:#66942f"></div>
  <!-- horizontal scrollbar -->
  <div class="abs" style="left:63px;top:615px;width:805px;height:11px;background:#1a1a1a"></div>
  <div class="abs" style="left:63px;top:615px;width:510px;height:11px;background:#464646"></div>
  <div class="abs" style="left:867px;top:53px;width:2px;height:573px;background:linear-gradient(90deg,#1a1a1a,#171717)"></div>
  <!-- minimap area -->
  <div class="abs" style="left:877px;top:252.5px;width:105px;height:2px;background:#2a4a66;opacity:0.8"></div>
  <div class="abs" style="left:871px;top:241px;width:2.5px;height:45px;background:#66942f"></div>
  <div class="abs" style="left:871.5px;top:216.5px;width:2.5px;height:2.5px;border-radius:50%;background:#6a3636"></div>
  <div class="abs" style="left:871px;top:226px;width:3px;height:3px;border-radius:50%;background:#5a6464"></div>
  <div class="abs" style="left:871px;top:231px;width:3px;height:3px;border-radius:50%;background:#5a6464"></div>
  <div class="abs" style="left:871px;top:82px;width:3px;height:3px;border-radius:50%;background:#7a3a3a"></div>
  <div class="abs" style="left:871px;top:90px;width:3px;height:3px;border-radius:50%;background:#5a5a5a"></div>
  <svg id="minimap" class="abs" style="left:868px;top:53px" width="114" height="573"><defs><filter id="mmb" x="-5%" y="-5%" width="110%" height="110%"><feGaussianBlur stdDeviation="0.45"/></filter></defs><g opacity="0.62" filter="url(#mmb)"><rect x="8.80" y="0.90" width="1.74" height="1.4" fill="#d4d4d4"/>
<rect x="10.54" y="0.90" width="2.61" height="1.4" fill="#d4d4d4"/>
<rect x="8.80" y="4.64" width="7.83" height="1.4" fill="#c586c0"/>
<rect x="17.50" y="4.64" width="2.61" height="1.4" fill="#d4d4d4"/>
<rect x="20.11" y="4.64" width="0.87" height="1.4" fill="#d4d4d4"/>
<rect x="20.98" y="4.64" width="6.09" height="1.4" fill="#4ec9b0"/>
<rect x="27.07" y="4.64" width="0.87" height="1.4" fill="#d4d4d4"/>
<rect x="8.80" y="8.38" width="2.61" height="1.4" fill="#c586c0"/>
<rect x="12.28" y="8.38" width="2.61" height="1.4" fill="#d4d4d4"/>
<rect x="14.89" y="8.38" width="0.87" height="1.4" fill="#d4d4d4"/>
<rect x="15.76" y="8.38" width="5.22" height="1.4" fill="#d4d4d4"/>
<rect x="20.98" y="8.38" width="0.87" height="1.4" fill="#d4d4d4"/>
<rect x="21.85" y="8.38" width="6.09" height="1.4" fill="#4ec9b0"/>
<rect x="27.94" y="8.38" width="0.87" height="1.4" fill="#d4d4d4"/>
<rect x="8.80" y="10.25" width="2.61" height="1.4" fill="#c586c0"/>
<rect x="12.28" y="10.25" width="8.70" height="1.4" fill="#d4d4d4"/>
<rect x="20.98" y="10.25" width="0.87" height="1.4" fill="#d4d4d4"/>
<rect x="21.85" y="10.25" width="7.83" height="1.4" fill="#d4d4d4"/>
<rect x="29.68" y="10.25" width="0.87" height="1.4" fill="#d4d4d4"/>
<rect x="30.55" y="10.25" width="3.48" height="1.4" fill="#d4d4d4"/>
<rect x="34.03" y="10.25" width="0.87" height="1.4" fill="#d4d4d4"/>
<rect x="34.90" y="10.25" width="3.48" height="1.4" fill="#4ec9b0"/>
<rect x="38.38" y="10.25" width="0.87" height="1.4" fill="#d4d4d4"/>
<rect x="8.80" y="12.12" width="2.61" height="1.4" fill="#c586c0"/>
<rect x="12.28" y="12.12" width="9.57" height="1.4" fill="#d4d4d4"/>
<rect x="21.85" y="12.12" width="0.87" height="1.4" fill="#d4d4d4"/>
<rect x="22.72" y="12.12" width="4.35" height="1.4" fill="#d4d4d4"/>
<rect x="27.07" y="12.12" width="0.87" height="1.4" fill="#d4d4d4"/>
<rect x="27.94" y="12.12" width="6.96" height="1.4" fill="#d4d4d4"/>
<rect x="34.90" y="12.12" width="0.87" height="1.4" fill="#d4d4d4"/>
<rect x="35.77" y="12.12" width="6.96" height="1.4" fill="#4ec9b0"/>
<rect x="42.73" y="12.12" width="0.87" height="1.4" fill="#d4d4d4"/>
<rect x="8.80" y="13.99" width="2.61" height="1.4" fill="#c586c0"/>
<rect x="12.28" y="13.99" width="9.57" height="1.4" fill="#d4d4d4"/>
<rect x="21.85" y="13.99" width="0.87" height="1.4" fill="#d4d4d4"/>
<rect x="22.72" y="13.99" width="4.35" height="1.4" fill="#d4d4d4"/>
<rect x="27.07" y="13.99" width="0.87" height="1.4" fill="#d4d4d4"/>
<rect x="27.94" y="13.99" width="6.96" height="1.4" fill="#d4d4d4"/>
<rect x="34.90" y="13.99" width="0.87" height="1.4" fill="#d4d4d4"/>
<rect x="35.77" y="13.99" width="8.70" height="1.4" fill="#4ec9b0"/>
<rect x="44.47" y="13.99" width="0.87" height="1.4" fill="#d4d4d4"/>
<rect x="8.80" y="15.86" width="2.61" height="1.4" fill="#c586c0"/>
<rect x="12.28" y="15.86" width="9.57" height="1.4" fill="#d4d4d4"/>
<rect x="21.85" y="15.86" width="0.87" height="1.4" fill="#d4d4d4"/>
<rect x="22.72" y="15.86" width="4.35" height="1.4" fill="#d4d4d4"/>
<rect x="27.07" y="15.86" width="0.87" height="1.4" fill="#d4d4d4"/>
<rect x="27.94" y="15.86" width="6.96" height="1.4" fill="#d4d4d4"/>
<rect x="34.90" y="15.86" width="0.87" height="1.4" fill="#d4d4d4"/>
<rect x="35.77" y="15.86" width="12.18" height="1.4" fill="#4ec9b0"/>
<rect x="47.95" y="15.86" width="0.87" height="1.4" fill="#d4d4d4"/>
<rect x="8.80" y="17.73" width="2.61" height="1.4" fill="#c586c0"/>
<rect x="12.28" y="17.73" width="9.57" height="1.4" fill="#d4d4d4"/>
<rect x="21.85" y="17.73" width="0.87" height="1.4" fill="#d4d4d4"/>
<rect x="22.72" y="17.73" width="4.35" height="1.4" fill="#d4d4d4"/>
<rect x="27.07" y="17.73" width="0.87" height="1.4" fill="#d4d4d4"/>
<rect x="27.94" y="17.73" width="6.96" height="1.4" fill="#d4d4d4"/>
<rect x="34.90" y="17.73" width="0.87" height="1.4" fill="#d4d4d4"/>
<rect x="35.77" y="17.73" width="13.92" height="1.4" fill="#4ec9b0"/>
<rect x="49.69" y="17.73" width="0.87" height="1.4" fill="#d4d4d4"/>
<rect x="8.80" y="19.60" width="2.61" height="1.4" fill="#c586c0"/>
<rect x="12.28" y="19.60" width="9.57" height="1.4" fill="#d4d4d4"/>
<rect x="21.85" y="19.60" width="0.87" height="1.4" fill="#d4d4d4"/>
<rect x="22.72" y="19.60" width="4.35" height="1.4" fill="#d4d4d4"/>
<rect x="27.07" y="19.60" width="0.87" height="1.4" fill="#d4d4d4"/>
<rect x="27.94" y="19.60" width="6.96" height="1.4" fill="#d4d4d4"/>
<rect x="34.90" y="19.60" width="0.87" height="1.4" fill="#d4d4d4"/>
<rect x="35.77" y="19.60" width="10.44" height="1.4" fill="#4ec9b0"/>
<rect x="46.21" y="19.60" width="0.87" height="1.4" fill="#d4d4d4"/>
<rect x="8.80" y="21.47" width="2.61" height="1.4" fill="#c586c0"/>
<rect x="12.28" y="21.47" width="9.57" height="1.4" fill="#d4d4d4"/>
<rect x="21.85" y="21.47" width="0.87" height="1.4" fill="#d4d4d4"/>
<rect x="22.72" y="21.47" width="4.35" height="1.4" fill="#d4d4d4"/>
<rect x="27.07" y="21.47" width="0.87" height="1.4" fill="#d4d4d4"/>
<rect x="27.94" y="21.47" width="6.96" height="1.4" fill="#d4d4d4"/>
<rect x="34.90" y="21.47" width="0.87" height="1.4" fill="#d4d4d4"/>
<rect x="35.77" y="21.47" width="10.44" height="1.4" fill="#4ec9b0"/>
<rect x="46.21" y="21.47" width="0.87" height="1.4" fill="#d4d4d4"/>
<rect x="8.80" y="23.34" width="2.61" height="1.4" fill="#c586c0"/>
<rect x="12.28" y="23.34" width="9.57" height="1.4" fill="#d4d4d4"/>
<rect x="21.85" y="23.34" width="0.87" height="1.4" fill="#d4d4d4"/>
<rect x="22.72" y="23.34" width="4.35" height="1.4" fill="#d4d4d4"/>
<rect x="27.07" y="23.34" width="0.87" height="1.4" fill="#d4d4d4"/>
<rect x="27.94" y="23.34" width="6.96" height="1.4" fill="#d4d4d4"/>
<rect x="34.90" y="23.34" width="0.87" height="1.4" fill="#d4d4d4"/>
<rect x="35.77" y="23.34" width="9.57" height="1.4" fill="#4ec9b0"/>
<rect x="45.34" y="23.34" width="0.87" height="1.4" fill="#d4d4d4"/>
<rect x="8.80" y="25.21" width="2.61" height="1.4" fill="#c586c0"/>
<rect x="12.28" y="25.21" width="9.57" height="1.4" fill="#d4d4d4"/>
<rect x="21.85" y="25.21" width="0.87" height="1.4" fill="#d4d4d4"/>
<rect x="22.72" y="25.21" width="4.35" height="1.4" fill="#d4d4d4"/>
<rect x="27.07" y="25.21" width="0.87" height="1.4" fill="#d4d4d4"/>
<rect x="27.94" y="25.21" width="6.96" height="1.4" fill="#d4d4d4"/>
<rect x="34.90" y="25.21" width="0.87" height="1.4" fill="#d4d4d4"/>
<rect x="35.77" y="25.21" width="8.70" height="1.4" fill="#4ec9b0"/>
<rect x="44.47" y="25.21" width="0.87" height="1.4" fill="#d4d4d4"/>
<rect x="8.80" y="27.08" width="2.61" height="1.4" fill="#c586c0"/>
<rect x="12.28" y="27.08" width="9.57" height="1.4" fill="#d4d4d4"/>
<rect x="21.85" y="27.08" width="0.87" height="1.4" fill="#d4d4d4"/>
<rect x="22.72" y="27.08" width="4.35" height="1.4" fill="#d4d4d4"/>
<rect x="27.07" y="27.08" width="0.87" height="1.4" fill="#d4d4d4"/>
<rect x="27.94" y="27.08" width="6.96" height="1.4" fill="#d4d4d4"/>
<rect x="34.90" y="27.08" width="0.87" height="1.4" fill="#d4d4d4"/>
<rect x="35.77" y="27.08" width="7.83" height="1.4" fill="#4ec9b0"/>
<rect x="43.60" y="27.08" width="0.87" height="1.4" fill="#d4d4d4"/>
<rect x="8.80" y="28.95" width="2.61" height="1.4" fill="#c586c0"/>
<rect x="12.28" y="28.95" width="7.83" height="1.4" fill="#d4d4d4"/>
<rect x="20.11" y="28.95" width="0.87" height="1.4" fill="#d4d4d4"/>
<rect x="20.98" y="28.95" width="12.18" height="1.4" fill="#d4d4d4"/>
<rect x="33.16" y="28.95" width="0.87" height="1.4" fill="#d4d4d4"/>
<rect x="34.03" y="28.95" width="7.83" height="1.4" fill="#d4d4d4"/>
<rect x="41.86" y="28.95" width="0.87" height="1.4" fill="#d4d4d4"/>
<rect x="42.73" y="28.95" width="6.09" height="1.4" fill="#4ec9b0"/>
<rect x="48.82" y="28.95" width="0.87" height="1.4" fill="#d4d4d4"/>
<rect x="8.80" y="30.82" width="2.61" height="1.4" fill="#c586c0"/>
<rect x="12.28" y="30.82" width="7.83" height="1.4" fill="#d4d4d4"/>
<rect x="20.11" y="30.82" width="0.87" height="1.4" fill="#d4d4d4"/>
<rect x="20.98" y="30.82" width="12.18" height="1.4" fill="#d4d4d4"/>
<rect x="33.16" y="30.82" width="0.87" height="1.4" fill="#d4d4d4"/>
<rect x="34.03" y="30.82" width="7.83" height="1.4" fill="#d4d4d4"/>
<rect x="41.86" y="30.82" width="0.87" height="1.4" fill="#d4d4d4"/>
<rect x="42.73" y="30.82" width="7.83" height="1.4" fill="#4ec9b0"/>
<rect x="50.56" y="30.82" width="0.87" height="1.4" fill="#d4d4d4"/>
<rect x="8.80" y="34.56" width="4.35" height="1.4" fill="#569cd6"/>
<rect x="14.02" y="34.56" width="11.31" height="1.4" fill="#4ec9b0"/>
<rect x="26.20" y="34.56" width="8.70" height="1.4" fill="#569cd6"/>
<rect x="35.77" y="34.56" width="6.96" height="1.4" fill="#4ec9b0"/>
<rect x="42.73" y="34.56" width="0.87" height="1.4" fill="#d4d4d4"/>
<rect x="44.47" y="34.56" width="12.18" height="1.4" fill="#4ec9b0"/>
<rect x="56.65" y="34.56" width="0.87" height="1.4" fill="#d4d4d4"/>
<rect x="58.39" y="34.56" width="8.70" height="1.4" fill="#4ec9b0"/>
<rect x="67.09" y="34.56" width="0.87" height="1.4" fill="#d4d4d4"/>
<rect x="68.83" y="34.56" width="10.44" height="1.4" fill="#4ec9b0"/>
<rect x="79.27" y="34.56" width="0.87" height="1.4" fill="#d4d4d4"/>
<rect x="81.01" y="34.56" width="13.92" height="1.4" fill="#4ec9b0"/>
<rect x="94.93" y="34.56" width="0.87" height="1.4" fill="#d4d4d4"/>
<rect x="96.67" y="34.56" width="7.83" height="1.4" fill="#4ec9b0"/>
<rect x="104.50" y="34.56" width="0.87" height="1.4" fill="#d4d4d4"/>
<rect x="106.24" y="34.56" width="9.57" height="1.4" fill="#4ec9b0"/>
<rect x="8.80" y="36.43" width="0.87" height="1.4" fill="#d4d4d4"/>
<rect x="12.28" y="40.17" width="2.61" height="1.4" fill="#c586c0"/>
<rect x="15.76" y="40.17" width="8.70" height="1.4" fill="#4ec9b0"/>
<rect x="24.46" y="40.17" width="0.87" height="1.4" fill="#d4d4d4"/>
<rect x="12.28" y="43.91" width="6.09" height="1.4" fill="#d4d4d4"/>
<rect x="19.24" y="43.91" width="7.83" height="1.4" fill="#9cdcfe"/>
<rect x="27.94" y="43.91" width="0.87" height="1.4" fill="#d4d4d4"/>
<rect x="29.68" y="43.91" width="13.05" height="1.4" fill="#ce9178"/>
<rect x="42.73" y="43.91" width="0.87" height="1.4" fill="#d4d4d4"/>
<rect x="12.28" y="51.39" width="5.22" height="1.4" fill="#569cd6"/>
<rect x="18.37" y="51.39" width="6.96" height="1.4" fill="#569cd6"/>
<rect x="26.20" y="51.39" width="3.48" height="1.4" fill="#dcdcaa"/>
<rect x="29.68" y="51.39" width="2.61" height="1.4" fill="#d4d4d4"/>
<rect x="33.16" y="51.39" width="3.48" height="1.4" fill="#4ec9b0"/>
<rect x="12.28" y="53.26" width="0.87" height="1.4" fill="#d4d4d4"/>
<rect x="15.76" y="55.13" width="5.22" height="1.4" fill="#c586c0"/>
<rect x="21.85" y="55.13" width="3.48" height="1.4" fill="#dcdcaa"/>
<rect x="25.33" y="55.13" width="1.74" height="1.4" fill="#d4d4d4"/>
<rect x="27.07" y="55.13" width="6.09" height="1.4" fill="#d4d4d4"/>
<rect x="33.16" y="55.13" width="0.87" height="1.4" fill="#d4d4d4"/>
<rect x="34.03" y="55.13" width="6.96" height="1.4" fill="#d4d4d4"/>
<rect x="40.99" y="55.13" width="2.61" height="1.4" fill="#ce9178"/>
<rect x="12.28" y="57.00" width="0.87" height="1.4" fill="#d4d4d4"/>
<rect x="12.28" y="60.74" width="5.22" height="1.4" fill="#569cd6"/>
<rect x="18.37" y="60.74" width="6.96" height="1.4" fill="#569cd6"/>
<rect x="26.20" y="60.74" width="4.35" height="1.4" fill="#dcdcaa"/>
<rect x="30.55" y="60.74" width="2.61" height="1.4" fill="#d4d4d4"/>
<rect x="34.03" y="60.74" width="5.22" height="1.4" fill="#569cd6"/>
<rect x="12.28" y="62.61" width="0.87" height="1.4" fill="#d4d4d4"/>
<rect x="15.76" y="64.48" width="5.22" height="1.4" fill="#c586c0"/>
<rect x="21.85" y="64.48" width="7.83" height="1.4" fill="#ce9178"/>
<rect x="30.55" y="64.48" width="0.87" height="1.4" fill="#ce9178"/>
<rect x="32.29" y="64.48" width="0.87" height="1.4" fill="#d4d4d4"/>
<rect x="34.03" y="64.48" width="3.48" height="1.4" fill="#dcdcaa"/>
<rect x="37.51" y="64.48" width="1.74" height="1.4" fill="#d4d4d4"/>
<rect x="39.25" y="64.48" width="0.87" height="1.4" fill="#d4d4d4"/>
<rect x="40.12" y="64.48" width="0.87" height="1.4" fill="#d4d4d4"/>
<rect x="40.99" y="64.48" width="0.87" height="1.4" fill="#d4d4d4"/>
<rect x="41.86" y="64.48" width="0.87" height="1.4" fill="#d4d4d4"/>
<rect x="42.73" y="64.48" width="0.87" height="1.4" fill="#4ec9b0"/>
<rect x="44.47" y="64.48" width="0.87" height="1.4" fill="#4ec9b0"/>
<rect x="45.34" y="64.48" width="0.87" height="1.4" fill="#d4d4d4"/>
<rect x="46.21" y="64.48" width="0.87" height="1.4" fill="#d4d4d4"/>
<rect x="47.08" y="64.48" width="2.61" height="1.4" fill="#ce9178"/>
<rect x="12.28" y="66.35" width="0.87" height="1.4" fill="#d4d4d4"/>
<rect x="12.28" y="70.09" width="5.22" height="1.4" fill="#569cd6"/>
<rect x="18.37" y="70.09" width="6.96" height="1.4" fill="#569cd6"/>
<rect x="26.20" y="70.09" width="8.70" height="1.4" fill="#dcdcaa"/>
<rect x="34.90" y="70.09" width="1.74" height="1.4" fill="#d4d4d4"/>
<rect x="12.28" y="71.96" width="0.87" height="1.4" fill="#d4d4d4"/>
<rect x="15.76" y="73.83" width="5.22" height="1.4" fill="#c586c0"/>
<rect x="21.85" y="73.83" width="6.09" height="1.4" fill="#4ec9b0"/>
<rect x="27.94" y="73.83" width="1.74" height="1.4" fill="#d4d4d4"/>
<rect x="29.68" y="73.83" width="2.61" height="1.4" fill="#dcdcaa"/>
<rect x="32.29" y="73.83" width="2.61" height="1.4" fill="#d4d4d4"/>
<rect x="12.28" y="75.70" width="0.87" height="1.4" fill="#d4d4d4"/>
<rect x="12.28" y="79.44" width="5.22" height="1.4" fill="#569cd6"/>
<rect x="18.37" y="79.44" width="6.96" height="1.4" fill="#569cd6"/>
<rect x="26.20" y="79.44" width="6.96" height="1.4" fill="#dcdcaa"/>
<rect x="33.16" y="79.44" width="2.61" height="1.4" fill="#d4d4d4"/>
<rect x="36.64" y="79.44" width="4.35" height="1.4" fill="#569cd6"/>
<rect x="12.28" y="81.31" width="0.87" height="1.4" fill="#d4d4d4"/>
<rect x="15.76" y="83.18" width="5.22" height="1.4" fill="#c586c0"/>
<rect x="21.85" y="83.18" width="0.87" height="1.4" fill="#d4d4d4"/>
<rect x="19.24" y="85.05" width="3.48" height="1.4" fill="#ce9178"/>
<rect x="22.72" y="85.05" width="0.87" height="1.4" fill="#d4d4d4"/>
<rect x="19.24" y="86.92" width="7.83" height="1.4" fill="#ce9178"/>
<rect x="27.07" y="86.92" width="0.87" height="1.4" fill="#d4d4d4"/>
<rect x="19.24" y="88.79" width="6.09" height="1.4" fill="#ce9178"/>
<rect x="25.33" y="88.79" width="0.87" height="1.4" fill="#d4d4d4"/>
<rect x="19.24" y="90.66" width="6.09" height="1.4" fill="#ce9178"/>
<rect x="25.33" y="90.66" width="0.87" height="1.4" fill="#d4d4d4"/>
<rect x="19.24" y="92.53" width="6.96" height="1.4" fill="#ce9178"/>
<rect x="26.20" y="92.53" width="0.87" height="1.4" fill="#d4d4d4"/>
<rect x="19.24" y="94.40" width="6.09" height="1.4" fill="#ce9178"/>
<rect x="25.33" y="94.40" width="0.87" height="1.4" fill="#d4d4d4"/>
<rect x="15.76" y="96.27" width="1.74" height="1.4" fill="#d4d4d4"/>
<rect x="12.28" y="98.14" width="0.87" height="1.4" fill="#d4d4d4"/>
<rect x="12.28" y="103.75" width="5.22" height="1.4" fill="#569cd6"/>
<rect x="18.37" y="103.75" width="6.96" height="1.4" fill="#569cd6"/>
<rect x="26.20" y="103.75" width="2.61" height="1.4" fill="#dcdcaa"/>
<rect x="28.81" y="103.75" width="1.74" height="1.4" fill="#d4d4d4"/>
<rect x="30.55" y="103.75" width="6.09" height="1.4" fill="#d4d4d4"/>
<rect x="36.64" y="103.75" width="1.74" height="1.4" fill="#d4d4d4"/>
<rect x="39.25" y="103.75" width="4.35" height="1.4" fill="#569cd6"/>
<rect x="12.28" y="105.62" width="0.87" height="1.4" fill="#d4d4d4"/>
<rect x="15.76" y="107.49" width="5.22" height="1.4" fill="#c586c0"/>
<rect x="21.85" y="107.49" width="0.87" height="1.4" fill="#d4d4d4"/>
<rect x="19.24" y="109.36" width="6.96" height="1.4" fill="#9cdcfe"/>
<rect x="26.20" y="109.36" width="1.74" height="1.4" fill="#d4d4d4"/>
<rect x="27.94" y="109.36" width="1.74" height="1.4" fill="#d4d4d4"/>
<rect x="29.68" y="109.36" width="0.87" height="1.4" fill="#d4d4d4"/>
<rect x="19.24" y="111.23" width="6.96" height="1.4" fill="#9cdcfe"/>
<rect x="26.20" y="111.23" width="1.74" height="1.4" fill="#d4d4d4"/>
<rect x="27.94" y="111.23" width="5.22" height="1.4" fill="#d4d4d4"/>
<rect x="33.16" y="111.23" width="1.74" height="1.4" fill="#d4d4d4"/>
<rect x="34.90" y="111.23" width="3.48" height="1.4" fill="#d4d4d4"/>
<rect x="38.38" y="111.23" width="0.87" height="1.4" fill="#d4d4d4"/>
<rect x="19.24" y="113.10" width="6.96" height="1.4" fill="#9cdcfe"/>
<rect x="26.20" y="113.10" width="1.74" height="1.4" fill="#d4d4d4"/>
<rect x="27.94" y="113.10" width="3.48" height="1.4" fill="#d4d4d4"/>
<rect x="31.42" y="113.10" width="0.87" height="1.4" fill="#d4d4d4"/>
<rect x="19.24" y="114.97" width="6.96" height="1.4" fill="#9cdcfe"/>
<rect x="26.20" y="114.97" width="1.74" height="1.4" fill="#d4d4d4"/>
<rect x="27.94" y="114.97" width="4.35" height="1.4" fill="#d4d4d4"/>
<rect x="32.29" y="114.97" width="0.87" height="1.4" fill="#d4d4d4"/>
<rect x="19.24" y="116.84" width="6.96" height="1.4" fill="#9cdcfe"/>
<rect x="26.20" y="116.84" width="1.74" height="1.4" fill="#d4d4d4"/>
<rect x="27.94" y="116.84" width="5.22" height="1.4" fill="#d4d4d4"/>
<rect x="33.16" y="116.84" width="0.87" height="1.4" fill="#d4d4d4"/>
<rect x="19.24" y="118.71" width="6.96" height="1.4" fill="#9cdcfe"/>
<rect x="26.20" y="118.71" width="1.74" height="1.4" fill="#d4d4d4"/>
<rect x="27.94" y="118.71" width="4.35" height="1.4" fill="#d4d4d4"/>
<rect x="32.29" y="118.71" width="0.87" height="1.4" fill="#d4d4d4"/>
<rect x="19.24" y="120.58" width="6.96" height="1.4" fill="#9cdcfe"/>
<rect x="26.20" y="120.58" width="1.74" height="1.4" fill="#d4d4d4"/>
<rect x="27.94" y="120.58" width="8.70" height="1.4" fill="#d4d4d4"/>
<rect x="36.64" y="120.58" width="1.74" height="1.4" fill="#d4d4d4"/>
<rect x="38.38" y="120.58" width="5.22" height="1.4" fill="#dcdcaa"/>
<rect x="43.60" y="120.58" width="1.74" height="1.4" fill="#d4d4d4"/>
<rect x="45.34" y="120.58" width="0.87" height="1.4" fill="#d4d4d4"/>
<rect x="46.21" y="120.58" width="0.87" height="1.4" fill="#d4d4d4"/>
<rect x="47.08" y="120.58" width="0.87" height="1.4" fill="#d4d4d4"/>
<rect x="47.95" y="120.58" width="0.87" height="1.4" fill="#d4d4d4"/>
<rect x="48.82" y="120.58" width="0.87" height="1.4" fill="#4ec9b0"/>
<rect x="49.69" y="120.58" width="2.61" height="1.4" fill="#ce9178"/>
<rect x="15.76" y="122.45" width="1.74" height="1.4" fill="#d4d4d4"/>
<rect x="12.28" y="124.32" width="0.87" height="1.4" fill="#d4d4d4"/>
<rect x="12.28" y="128.06" width="5.22" height="1.4" fill="#569cd6"/>
<rect x="18.37" y="128.06" width="6.96" height="1.4" fill="#569cd6"/>
<rect x="26.20" y="128.06" width="11.31" height="1.4" fill="#dcdcaa"/>
<rect x="37.51" y="128.06" width="2.61" height="1.4" fill="#d4d4d4"/>
<rect x="40.99" y="128.06" width="4.35" height="1.4" fill="#569cd6"/>
<rect x="12.28" y="129.93" width="0.87" height="1.4" fill="#d4d4d4"/>
<rect x="15.76" y="131.80" width="5.22" height="1.4" fill="#c586c0"/>
<rect x="21.85" y="131.80" width="0.87" height="1.4" fill="#d4d4d4"/>
<rect x="19.24" y="133.67" width="2.61" height="1.4" fill="#ce9178"/>
<rect x="22.72" y="133.67" width="1.74" height="1.4" fill="#d4d4d4"/>
<rect x="25.33" y="133.67" width="5.22" height="1.4" fill="#ce9178"/>
<rect x="30.55" y="133.67" width="0.87" height="1.4" fill="#d4d4d4"/>
<rect x="15.76" y="135.54" width="1.74" height="1.4" fill="#d4d4d4"/>
<rect x="12.28" y="137.41" width="0.87" height="1.4" fill="#d4d4d4"/>
<rect x="12.28" y="141.15" width="5.22" height="1.4" fill="#569cd6"/>
<rect x="18.37" y="141.15" width="6.96" height="1.4" fill="#569cd6"/>
<rect x="26.20" y="141.15" width="10.44" height="1.4" fill="#dcdcaa"/>
<rect x="36.64" y="141.15" width="2.61" height="1.4" fill="#d4d4d4"/>
<rect x="40.12" y="141.15" width="4.35" height="1.4" fill="#569cd6"/>
<rect x="12.28" y="143.02" width="0.87" height="1.4" fill="#d4d4d4"/>
<rect x="15.76" y="144.89" width="5.22" height="1.4" fill="#c586c0"/>
<rect x="21.85" y="144.89" width="0.87" height="1.4" fill="#d4d4d4"/>
<rect x="19.24" y="146.76" width="2.61" height="1.4" fill="#ce9178"/>
<rect x="22.72" y="146.76" width="1.74" height="1.4" fill="#d4d4d4"/>
<rect x="25.33" y="146.76" width="1.74" height="1.4" fill="#b5cea8"/>
<rect x="27.07" y="146.76" width="0.87" height="1.4" fill="#d4d4d4"/>
<rect x="19.24" y="148.63" width="2.61" height="1.4" fill="#ce9178"/>
<rect x="22.72" y="148.63" width="1.74" height="1.4" fill="#d4d4d4"/>
<rect x="25.33" y="148.63" width="1.74" height="1.4" fill="#b5cea8"/>
<rect x="27.07" y="148.63" width="0.87" height="1.4" fill="#d4d4d4"/>
<rect x="19.24" y="150.50" width="2.61" height="1.4" fill="#ce9178"/>
<rect x="22.72" y="150.50" width="1.74" height="1.4" fill="#d4d4d4"/>
<rect x="25.33" y="150.50" width="1.74" height="1.4" fill="#b5cea8"/>
<rect x="27.07" y="150.50" width="0.87" height="1.4" fill="#d4d4d4"/>
<rect x="19.24" y="152.37" width="2.61" height="1.4" fill="#ce9178"/>
<rect x="22.72" y="152.37" width="1.74" height="1.4" fill="#d4d4d4"/>
<rect x="25.33" y="152.37" width="1.74" height="1.4" fill="#b5cea8"/>
<rect x="27.07" y="152.37" width="0.87" height="1.4" fill="#d4d4d4"/>
<rect x="19.24" y="154.24" width="2.61" height="1.4" fill="#ce9178"/>
<rect x="22.72" y="154.24" width="1.74" height="1.4" fill="#d4d4d4"/>
<rect x="25.33" y="154.24" width="1.74" height="1.4" fill="#b5cea8"/>
<rect x="27.07" y="154.24" width="0.87" height="1.4" fill="#d4d4d4"/>
<rect x="19.24" y="156.11" width="2.61" height="1.4" fill="#ce9178"/>
<rect x="22.72" y="156.11" width="1.74" height="1.4" fill="#d4d4d4"/>
<rect x="25.33" y="156.11" width="1.74" height="1.4" fill="#b5cea8"/>
<rect x="27.07" y="156.11" width="0.87" height="1.4" fill="#d4d4d4"/>
<rect x="15.76" y="157.98" width="1.74" height="1.4" fill="#d4d4d4"/>
<rect x="12.28" y="159.85" width="0.87" height="1.4" fill="#d4d4d4"/>
<rect x="12.28" y="165.46" width="5.22" height="1.4" fill="#569cd6"/>
<rect x="18.37" y="165.46" width="6.96" height="1.4" fill="#569cd6"/>
<rect x="26.20" y="165.46" width="6.96" height="1.4" fill="#dcdcaa"/>
<rect x="33.16" y="165.46" width="1.74" height="1.4" fill="#d4d4d4"/>
<rect x="12.28" y="167.33" width="0.87" height="1.4" fill="#d4d4d4"/>
<rect x="15.76" y="169.20" width="6.96" height="1.4" fill="#9cdcfe"/>
<rect x="23.59" y="169.20" width="0.87" height="1.4" fill="#d4d4d4"/>
<rect x="25.33" y="169.20" width="2.61" height="1.4" fill="#c586c0"/>
<rect x="28.81" y="169.20" width="6.09" height="1.4" fill="#dcdcaa"/>
<rect x="34.90" y="169.20" width="2.61" height="1.4" fill="#d4d4d4"/>
<rect x="15.76" y="171.07" width="6.96" height="1.4" fill="#9cdcfe"/>
<rect x="22.72" y="171.07" width="1.74" height="1.4" fill="#d4d4d4"/>
<rect x="24.46" y="171.07" width="6.09" height="1.4" fill="#dcdcaa"/>
<rect x="30.55" y="171.07" width="1.74" height="1.4" fill="#d4d4d4"/>
<rect x="32.29" y="171.07" width="3.48" height="1.4" fill="#4ec9b0"/>
<rect x="35.77" y="171.07" width="2.61" height="1.4" fill="#ce9178"/>
<rect x="15.76" y="172.94" width="6.96" height="1.4" fill="#9cdcfe"/>
<rect x="22.72" y="172.94" width="1.74" height="1.4" fill="#d4d4d4"/>
<rect x="24.46" y="172.94" width="12.18" height="1.4" fill="#dcdcaa"/>
<rect x="36.64" y="172.94" width="1.74" height="1.4" fill="#d4d4d4"/>
<rect x="38.38" y="172.94" width="3.48" height="1.4" fill="#4ec9b0"/>
<rect x="42.73" y="172.94" width="1.74" height="1.4" fill="#d4d4d4"/>
<rect x="45.34" y="172.94" width="1.74" height="1.4" fill="#d4d4d4"/>
<rect x="47.95" y="172.94" width="3.48" height="1.4" fill="#d4d4d4"/>
<rect x="51.43" y="172.94" width="2.61" height="1.4" fill="#ce9178"/>
<rect x="15.76" y="174.81" width="6.96" height="1.4" fill="#9cdcfe"/>
<rect x="22.72" y="174.81" width="1.74" height="1.4" fill="#d4d4d4"/>
<rect x="24.46" y="174.81" width="6.09" height="1.4" fill="#dcdcaa"/>
<rect x="30.55" y="174.81" width="0.87" height="1.4" fill="#179fff"/>
<rect x="31.42" y="174.81" width="9.57" height="1.4" fill="#dcdcaa"/>
<rect x="40.99" y="174.81" width="0.87" height="1.4" fill="#ffd700"/>
<rect x="41.86" y="174.81" width="17.40" height="1.4" fill="#ce9178"/>
<rect x="59.26" y="174.81" width="0.87" height="1.4" fill="#ffd700"/>
<rect x="60.13" y="174.81" width="0.87" height="1.4" fill="#179fff"/>
<rect x="61.00" y="174.81" width="0.87" height="1.4" fill="#d4d4d4"/>
<rect x="15.76" y="176.68" width="6.96" height="1.4" fill="#9cdcfe"/>
<rect x="22.72" y="176.68" width="1.74" height="1.4" fill="#d4d4d4"/>
<rect x="24.46" y="176.68" width="7.83" height="1.4" fill="#dcdcaa"/>
<rect x="32.29" y="176.68" width="0.87" height="1.4" fill="#179fff"/>
<rect x="33.16" y="176.68" width="1.74" height="1.4" fill="#b5cea8"/>
<rect x="34.90" y="176.68" width="0.87" height="1.4" fill="#179fff"/>
<rect x="35.77" y="176.68" width="0.87" height="1.4" fill="#d4d4d4"/>
<rect x="15.76" y="178.55" width="6.96" height="1.4" fill="#9cdcfe"/>
<rect x="22.72" y="178.55" width="1.74" height="1.4" fill="#d4d4d4"/>
<rect x="24.46" y="178.55" width="12.18" height="1.4" fill="#dcdcaa"/>
<rect x="36.64" y="178.55" width="0.87" height="1.4" fill="#179fff"/>
<rect x="37.51" y="178.55" width="3.48" height="1.4" fill="#ce9178"/>
<rect x="40.99" y="178.55" width="0.87" height="1.4" fill="#179fff"/>
<rect x="41.86" y="178.55" width="0.87" height="1.4" fill="#d4d4d4"/>
<rect x="15.76" y="182.29" width="5.22" height="1.4" fill="#c586c0"/>
<rect x="21.85" y="182.29" width="6.96" height="1.4" fill="#9cdcfe"/>
<rect x="28.81" y="182.29" width="0.87" height="1.4" fill="#d4d4d4"/>
<rect x="12.28" y="184.16" width="0.87" height="1.4" fill="#da70d6"/>
<rect x="12.28" y="187.90" width="5.22" height="1.4" fill="#569cd6"/>
<rect x="18.37" y="187.90" width="6.96" height="1.4" fill="#569cd6"/>
<rect x="26.20" y="187.90" width="5.22" height="1.4" fill="#dcdcaa"/>
<rect x="31.42" y="187.90" width="0.87" height="1.4" fill="#da70d6"/>
<rect x="32.29" y="187.90" width="7.83" height="1.4" fill="#4ec9b0"/>
<rect x="40.99" y="187.90" width="5.22" height="1.4" fill="#9cdcfe"/>
<rect x="46.21" y="187.90" width="0.87" height="1.4" fill="#da70d6"/>
<rect x="12.28" y="189.77" width="0.87" height="1.4" fill="#da70d6"/>
<rect x="15.76" y="191.64" width="5.22" height="1.4" fill="#9cdcfe"/>
<rect x="20.98" y="191.64" width="1.74" height="1.4" fill="#d4d4d4"/>
<rect x="22.72" y="191.64" width="6.96" height="1.4" fill="#dcdcaa"/>
<rect x="29.68" y="191.64" width="0.87" height="1.4" fill="#179fff"/>
<rect x="30.55" y="191.64" width="8.70" height="1.4" fill="#ce9178"/>
<rect x="39.25" y="191.64" width="0.87" height="1.4" fill="#179fff"/>
<rect x="40.12" y="191.64" width="0.87" height="1.4" fill="#d4d4d4"/>
<rect x="15.76" y="193.51" width="1.74" height="1.4" fill="#6a9955"/>
<rect x="18.37" y="193.51" width="24.36" height="1.4" fill="#6a9955"/>
<rect x="15.76" y="195.38" width="22.62" height="1.4" fill="#6a9955"/>
<rect x="39.25" y="195.38" width="6.96" height="1.4" fill="#6a9955"/>
<rect x="47.08" y="195.38" width="1.74" height="1.4" fill="#6a9955"/>
<rect x="15.76" y="199.12" width="5.22" height="1.4" fill="#9cdcfe"/>
<rect x="20.98" y="199.12" width="1.74" height="1.4" fill="#d4d4d4"/>
<rect x="22.72" y="199.12" width="6.96" height="1.4" fill="#dcdcaa"/>
<rect x="29.68" y="199.12" width="0.87" height="1.4" fill="#179fff"/>
<rect x="30.55" y="199.12" width="7.83" height="1.4" fill="#ce9178"/>
<rect x="38.38" y="199.12" width="0.87" height="1.4" fill="#179fff"/>
<rect x="39.25" y="199.12" width="1.74" height="1.4" fill="#d4d4d4"/>
<rect x="40.99" y="199.12" width="12.18" height="1.4" fill="#dcdcaa"/>
<rect x="53.17" y="199.12" width="0.87" height="1.4" fill="#179fff"/>
<rect x="54.04" y="199.12" width="0.87" height="1.4" fill="#ffd700"/>
<rect x="19.24" y="200.99" width="5.22" height="1.4" fill="#ce9178"/>
<rect x="25.33" y="200.99" width="1.74" height="1.4" fill="#d4d4d4"/>
<rect x="27.94" y="200.99" width="0.87" height="1.4" fill="#da70d6"/>
<rect x="22.72" y="202.86" width="5.22" height="1.4" fill="#ce9178"/>
<rect x="28.81" y="202.86" width="1.74" height="1.4" fill="#d4d4d4"/>
<rect x="31.42" y="202.86" width="3.48" height="1.4" fill="#569cd6"/>
<rect x="34.90" y="202.86" width="0.87" height="1.4" fill="#d4d4d4"/>
<rect x="22.72" y="204.73" width="5.22" height="1.4" fill="#ce9178"/>
<rect x="28.81" y="204.73" width="1.74" height="1.4" fill="#d4d4d4"/>
<rect x="31.42" y="204.73" width="6.09" height="1.4" fill="#ce9178"/>
<rect x="37.51" y="204.73" width="0.87" height="1.4" fill="#d4d4d4"/>
<rect x="19.24" y="206.60" width="0.87" height="1.4" fill="#da70d6"/>
<rect x="20.11" y="206.60" width="0.87" height="1.4" fill="#d4d4d4"/>
<rect x="19.24" y="208.47" width="9.57" height="1.4" fill="#ce9178"/>
<rect x="29.68" y="208.47" width="1.74" height="1.4" fill="#d4d4d4"/>
<rect x="32.29" y="208.47" width="0.87" height="1.4" fill="#da70d6"/>
<rect x="22.72" y="210.34" width="10.44" height="1.4" fill="#ce9178"/>
<rect x="34.03" y="210.34" width="1.74" height="1.4" fill="#d4d4d4"/>
<rect x="36.64" y="210.34" width="6.96" height="1.4" fill="#ce9178"/>
<rect x="19.24" y="212.21" width="0.87" height="1.4" fill="#da70d6"/>
<rect x="20.11" y="212.21" width="0.87" height="1.4" fill="#d4d4d4"/>
<rect x="19.24" y="214.08" width="5.22" height="1.4" fill="#ce9178"/>
<rect x="25.33" y="214.08" width="1.74" height="1.4" fill="#d4d4d4"/>
<rect x="27.94" y="214.08" width="0.87" height="1.4" fill="#da70d6"/>
<rect x="22.72" y="215.95" width="8.70" height="1.4" fill="#ce9178"/>
<rect x="32.29" y="215.95" width="1.74" height="1.4" fill="#d4d4d4"/>
<rect x="34.90" y="215.95" width="6.09" height="1.4" fill="#ce9178"/>
<rect x="40.99" y="215.95" width="0.87" height="1.4" fill="#d4d4d4"/>
<rect x="22.72" y="217.82" width="10.44" height="1.4" fill="#ce9178"/>
<rect x="34.03" y="217.82" width="1.74" height="1.4" fill="#d4d4d4"/>
<rect x="36.64" y="217.82" width="0.87" height="1.4" fill="#179fff"/>
<rect x="26.20" y="219.69" width="5.22" height="1.4" fill="#ce9178"/>
<rect x="32.29" y="219.69" width="1.74" height="1.4" fill="#d4d4d4"/>
<rect x="34.90" y="219.69" width="6.96" height="1.4" fill="#ce9178"/>
<rect x="41.86" y="219.69" width="0.87" height="1.4" fill="#d4d4d4"/>
<rect x="22.72" y="221.56" width="0.87" height="1.4" fill="#179fff"/>
<rect x="23.59" y="221.56" width="0.87" height="1.4" fill="#d4d4d4"/>
<rect x="19.24" y="223.43" width="0.87" height="1.4" fill="#da70d6"/>
<rect x="20.11" y="223.43" width="0.87" height="1.4" fill="#d4d4d4"/>
<rect x="15.76" y="225.30" width="0.87" height="1.4" fill="#ffd700"/>
<rect x="16.63" y="225.30" width="0.87" height="1.4" fill="#179fff"/>
<rect x="17.50" y="225.30" width="0.87" height="1.4" fill="#d4d4d4"/>
<rect x="12.28" y="229.04" width="0.87" height="1.4" fill="#da70d6"/>
<rect x="8.80" y="232.78" width="0.87" height="1.4" fill="#ffd700"/></g></svg>
  <!-- vertical scrollbar -->
  <div class="abs" style="left:982px;top:53px;width:1px;height:573px;background:#3a3a3a"></div>
  <div class="abs" style="left:982px;top:394px;width:13px;height:118px;background:#4a4a4a"></div>
  <div class="abs" style="left:982px;top:106px;width:5px;height:7px;background:#8a4550"></div>
  <div class="abs" style="left:982px;top:120px;width:5px;height:7px;background:#37707a"></div>
  <div class="abs" style="left:982px;top:369px;width:4px;height:6px;background:#a04550"></div>
  <div class="abs" style="left:982px;top:388px;width:4px;height:6px;background:#2b7a80"></div>
  <div class="abs" style="left:982px;top:398px;width:4px;height:6px;background:#5a6a8a"></div>
  <div class="abs" style="left:982px;top:416px;width:5px;height:90px;background:#5f7040"></div>
  <div class="abs" style="left:982px;top:439px;width:13px;height:1px;background:#b0b0b0"></div>
</div>

<div id="status">
  <svg class="abs" style="left:15px;top:4px" width="8" height="13" viewBox="0 0 8 13"><circle cx="2" cy="2" r="1.5" fill="none" stroke="#fff" stroke-width="1.1"/><circle cx="2" cy="11" r="1.5" fill="none" stroke="#fff" stroke-width="1.1"/><circle cx="6" cy="4.5" r="1.5" fill="none" stroke="#fff" stroke-width="1.1"/><path d="M2 3.5v6M6 6c0 2-4 1.5-4 3.5" fill="none" stroke="#fff" stroke-width="1.1"/></svg>
  <div class="si" style="left:30.5px">master*</div>
  <svg class="abs" style="left:84px;top:4px" width="13" height="13" viewBox="0 0 13 13"><path d="M2 6.5a4.5 4.5 0 0 1 8-2.8M11 6.5a4.5 4.5 0 0 1-8 2.8" fill="none" stroke="#fff" stroke-width="1.3"/><path d="M10.5 1v3h-3M2.5 12V9h3" fill="none" stroke="#fff" stroke-width="1.3"/></svg>
  <svg class="abs" style="left:112px;top:4px" width="13" height="13" viewBox="0 0 13 13"><circle cx="6.5" cy="6.5" r="5.6" fill="none" stroke="#fff" stroke-width="1.1"/><path d="M4 4l5 5M9 4l-5 5" stroke="#fff" stroke-width="1.1"/></svg>
  <div class="si" style="left:127.5px">0</div>
  <svg class="abs" style="left:138px;top:4px" width="13" height="12" viewBox="0 0 13 12"><path d="M6.5 1L12.2 11H0.8z" fill="none" stroke="#fff" stroke-width="1.1"/><path d="M6.5 4.5v3.5M6.5 9v1" stroke="#fff" stroke-width="1.1"/></svg>
  <div class="si" style="left:153.5px">0</div>
  <div class="si" style="left:833px;font-size:10.75px">Lín. 107, Col. 11 (1 seleccionada)</div>
  <div class="si" style="left:1008px;font-size:10.3px">Espacios: 4</div>
  <div class="si" style="left:1076px">UTF-8</div>
  <div class="si" style="left:1121px;transform:scaleX(0.83);transform-origin:left">CRLF</div>
  <div class="si" style="left:1160px;transform:scaleX(0.91);transform-origin:left">PHP</div>
  <svg class="abs" style="left:1196px;top:4px" width="14" height="13" viewBox="0 0 14 13"><path d="M2.5 4.5C2.5 1.8 4.5 0.8 7 0.8s4.5 1 4.5 3.7v1.2c1.2.4 1.8 1.3 1.8 2.5 0 2.2-2.8 4-6.3 4S0.7 10.4 0.7 8.2c0-1.2.6-2.1 1.8-2.5z" fill="#fff"/><rect x="4" y="3" width="2" height="2.6" fill="#0b7dc9"/><rect x="8" y="3" width="2" height="2.6" fill="#0b7dc9"/><rect x="3.5" y="7.5" width="7" height="2.5" rx="1" fill="#0b7dc9"/><rect x="5.5" y="7.5" width="1" height="2.5" fill="#fff"/><rect x="7.5" y="7.5" width="1" height="2.5" fill="#fff"/></svg>
  <svg class="abs" style="left:1224px;top:4px" width="16" height="14" viewBox="0 0 16 14"><circle cx="5" cy="6" r="2.5" fill="none" stroke="#fff" stroke-width="1.2"/><path d="M0.8 13.5c0-2.5 1.8-4.5 4.2-4.5s4.2 2 4.2 4.5" fill="none" stroke="#fff" stroke-width="1.2"/><path d="M6 3.5V0.8h9v6H10.5L8.5 8.5" fill="none" stroke="#fff" stroke-width="1.2"/></svg>
  <svg class="abs" style="left:1253px;top:4px" width="12" height="14" viewBox="0 0 12 14"><path d="M6 1.5c-2.5 0-4 2-4 4.5v3L1 11h10l-1-2V6c0-2.5-1.5-4.5-4-4.5zM4.5 12.5a1.5 1.5 0 0 0 3 0" fill="none" stroke="#fff" stroke-width="1.2"/></svg>
</div>

<div id="taskbar">
  <div class="abs" style="left:0;top:0;width:1280px;height:1px;background:#0c1c58"></div>
  <div class="abs" style="left:0;top:1px;width:1280px;height:6px;background:#20213f"></div>
  <div class="abs" style="left:0;top:7px;width:1280px;height:4px;background:#2c1b4b"></div>
    <!-- windows -->
  <svg class="abs" style="left:20px;top:12px" width="21" height="22" viewBox="0 0 21 22"><defs><linearGradient id="wg" x1="0" y1="0" x2="1" y2="1"><stop offset="0" stop-color="#6ad3ff"/><stop offset="1" stop-color="#1c9be8"/></linearGradient></defs><rect x="0" y="0" width="10" height="10.5" fill="url(#wg)"/><rect x="11" y="0" width="10" height="10.5" fill="url(#wg)"/><rect x="0" y="11.5" width="10" height="10.5" fill="url(#wg)"/><rect x="11" y="11.5" width="10" height="10.5" fill="url(#wg)"/></svg>
  <!-- search -->
  <svg class="abs" style="left:62px;top:11px" width="21" height="23" viewBox="0 0 21 23"><circle cx="12" cy="9" r="7.3" fill="#4a4670" stroke="#e6e0f5" stroke-width="2.2"/><path d="M7 14.5L1.5 21" stroke="#e6e0f5" stroke-width="2.6" stroke-linecap="round"/></svg>
  <!-- task view -->
  <svg class="abs" style="left:102px;top:12px" width="23" height="21" viewBox="0 0 23 21"><rect x="0" y="7" width="16" height="14" fill="#6b6b6b"/><rect x="6" y="0" width="17" height="15" fill="#e8e8e8"/><rect x="6" y="7" width="10" height="8" fill="#b5b5b5"/></svg>
  <!-- weather -->
  <svg class="abs" style="left:144px;top:9px" width="30" height="25" viewBox="0 -1 30 25"><defs><linearGradient id="sg" x1="0" y1="0" x2="0" y2="1"><stop offset="0" stop-color="#ffc21a"/><stop offset="1" stop-color="#f2711c"/></linearGradient></defs><circle cx="10" cy="14" r="9.5" fill="url(#sg)"/><circle cx="17.5" cy="7.5" r="8.5" fill="#231d48"/><text x="11.5" y="8.5" font-family="Liberation Sans" font-size="10" fill="#ffffff">17°</text></svg>
  <!-- teams chat -->
  <svg class="abs" style="left:185px;top:11px" width="22" height="23" viewBox="0 0 22 23"><path d="M11 0.5a10.5 10.5 0 1 1-5 19.7L1 22l1.6-4.8A10.5 10.5 0 0 1 11 0.5z" fill="#7b6fd6"/><rect x="5" y="7" width="8" height="7" rx="1" fill="#ffffff"/><path d="M13.5 9.5l3.5-2v6l-3.5-2z" fill="#ffffff"/></svg>
  <!-- store -->
  <svg class="abs" style="left:226px;top:11px" width="22" height="23" viewBox="0 0 22 23"><path d="M6 5V3a2 2 0 0 1 2-2h6a2 2 0 0 1 2 2v2" fill="none" stroke="#3a96dd" stroke-width="1.6"/><rect x="0.5" y="5" width="21" height="17.5" rx="2.5" fill="#f3f3f3"/><rect x="7" y="9" width="3.5" height="3.5" fill="#f25022"/><rect x="11.5" y="9" width="3.5" height="3.5" fill="#7fba00"/><rect x="7" y="13.5" width="3.5" height="3.5" fill="#00a4ef"/><rect x="11.5" y="13.5" width="3.5" height="3.5" fill="#ffb900"/></svg>
  <!-- chrome -->
  <svg class="abs" style="left:267px;top:9px" width="28" height="26" viewBox="0 0 28 26"><circle cx="12" cy="14" r="11.5" fill="#4caf50"/><path d="M12 2.5a11.5 11.5 0 0 1 10 5.8H12z" fill="#e53935"/><path d="M2 8.3A11.5 11.5 0 0 1 12 2.5v5.8L7 17z" fill="#e53935"/><path d="M22 8.3A11.5 11.5 0 0 1 12 25.5l5-8.5z" fill="#fbc02d"/><circle cx="12" cy="14" r="5" fill="#ffffff"/><circle cx="12" cy="14" r="3.9" fill="#1e88e5"/><circle cx="21" cy="7" r="6.5" fill="#c8b0c0"/><circle cx="21" cy="7" r="5" fill="#3b2a3a"/><path d="M18 12c0-3 1.5-5 3-5s3 2 3 5" fill="#d8c8d0"/></svg>
  <div class="abs" style="left:275px;top:38px;width:6px;height:2.5px;border-radius:1px;background:#9a9aab"></div>
  <!-- netflix -->
  <svg class="abs" style="left:308px;top:12px" width="23" height="22" viewBox="0 0 23 22"><rect width="23" height="22" fill="#0b0b0b"/><path d="M8 3h3l2.5 8V3h2.5v16h-3L10.5 11v8H8z" fill="#d81f26"/></svg>
  <!-- whatsapp -->
  <svg class="abs" style="left:349px;top:11px" width="24" height="24" viewBox="0 0 24 24"><path d="M12 1a11 11 0 1 1-5.4 20.6L1 23l1.5-5.3A11 11 0 0 1 12 1z" fill="#f0f0f0"/><path d="M12 2.8a9.2 9.2 0 1 1-4.7 17.1L3.6 21l1.1-3.5A9.2 9.2 0 0 1 12 2.8z" fill="#3bb94a"/><path d="M8.5 7c.6-.7 1.3-.6 1.6 0l1 2c.2.5-.2 1-.6 1.4.6 1.3 1.7 2.4 3 3 .4-.4.9-.8 1.4-.6l2 1c.6.3.7 1 0 1.6-1.2 1.2-2.8 1.2-4.8 0a11 11 0 0 1-3.6-3.6C7.3 9.8 7.3 8.2 8.5 7z" fill="#ffffff"/></svg>
  <!-- explorer -->
  <svg class="abs" style="left:390px;top:12px" width="24" height="21" viewBox="0 0 24 21"><path d="M0 2a1.5 1.5 0 0 1 1.5-1.5H8l2 2h12.5A1.5 1.5 0 0 1 24 4v15.5a1.5 1.5 0 0 1-1.5 1.5h-21A1.5 1.5 0 0 1 0 19.5z" fill="#e8b83a"/><path d="M0 5h24v14.5a1.5 1.5 0 0 1-1.5 1.5h-21A1.5 1.5 0 0 1 0 19.5z" fill="#fcd56a"/><rect x="7" y="13" width="10" height="8" fill="#2a7fd4"/></svg>
  <div class="abs" style="left:399px;top:38px;width:6px;height:2.5px;border-radius:1px;background:#9a9aab"></div>
  <!-- xampp -->
  <svg class="abs" style="left:432px;top:12px" width="23" height="22" viewBox="0 0 23 22"><rect width="23" height="22" rx="2" fill="#e67a33"/><path d="M10.5 5.5c-3 0-5.5 1-5.5 3 0 1.2 1 2 2.5 2.5C6 11.5 5 12.3 5 13.5c0 2 2.5 3 5.5 3M12.5 5.5c3 0 5.5 1 5.5 3 0 1.2-1 2-2.5 2.5 1.5.5 2.5 1.3 2.5 2.5 0 2-2.5 3-5.5 3" fill="none" stroke="#fff3e0" stroke-width="2"/></svg>
  <div class="abs" style="left:440px;top:38px;width:6px;height:2.5px;border-radius:1px;background:#9a9aab"></div>
  <!-- vscode active -->
  <div class="abs" style="left:466px;top:3px;width:37px;height:40px;border-radius:4px;background:#2f2a55"></div>
  <svg class="abs" style="left:473px;top:11px" width="23" height="23" viewBox="0 0 24 24"><path d="M23.15 2.587L18.21.21a1.494 1.494 0 0 0-1.705.29l-9.46 8.63-4.12-3.128a.999.999 0 0 0-1.276.057L.327 7.261A1 1 0 0 0 .326 8.74L3.899 12 .326 15.26a1 1 0 0 0 .001 1.479L1.65 17.94a.999.999 0 0 0 1.276.057l4.12-3.128 9.46 8.63a1.492 1.492 0 0 0 1.704.29l4.942-2.377A1.5 1.5 0 0 0 24 20.06V3.939a1.5 1.5 0 0 0-.85-1.352zm-5.146 14.861L10.826 12l7.178-5.448v10.896z" fill="#2b9be6"/><path d="M18.004 0.3l5.146 2.287A1.5 1.5 0 0 1 24 3.939V20.06a1.5 1.5 0 0 1-.85 1.353l-5.146 2.287z" fill="#45aef0"/></svg>
  <div class="abs" style="left:477px;top:37.5px;width:15px;height:3px;border-radius:1.5px;background:#8fc4f0"></div>
  <!-- camtasia green -->
  <svg class="abs" style="left:514px;top:11px" width="24" height="23" viewBox="0 0 24 23"><rect width="24" height="23" rx="2.5" fill="#52b52a"/><path d="M18 5H7.5L5 7.5v8L7.5 18H18v-3.5H9.5v-6H18z" fill="#f2f8e8"/></svg>
  <div class="abs" style="left:522px;top:38px;width:6px;height:2.5px;border-radius:1px;background:#9a9aab"></div>
  <!-- excel -->
  <svg class="abs" style="left:555px;top:12px" width="24" height="22" viewBox="0 0 24 22"><rect x="7" y="0" width="17" height="22" rx="1.5" fill="#1a8f4e"/><rect x="14" y="0" width="10" height="22" rx="1.5" fill="#27a366"/><rect x="0" y="5" width="12" height="12" rx="1" fill="#107c41"/><path d="M3 8l5 6M8 8l-5 6" stroke="#fff" stroke-width="1.6"/></svg>
  <div class="abs" style="left:563px;top:38px;width:6px;height:2.5px;border-radius:1px;background:#9a9aab"></div>
  <!-- camtasia red -->
  <svg class="abs" style="left:596px;top:11px" width="24" height="23" viewBox="0 0 24 23"><rect width="24" height="23" rx="2.5" fill="#e64545"/><path d="M18 5H7.5L5 7.5v8L7.5 18H18v-3.5H9.5v-6H18z" fill="#fde8e8"/></svg>
  <div class="abs" style="left:604px;top:38px;width:6px;height:2.5px;border-radius:1px;background:#9a9aab"></div>
  <!-- tray -->
  <svg class="abs" style="left:986px;top:18px" width="13" height="8" viewBox="0 0 13 8"><path d="M1 7l5.5-5.5L12 7" fill="none" stroke="#d8d8e8" stroke-width="1.4"/></svg>
  <svg class="abs" style="left:1006px;top:17px" width="17" height="14" viewBox="0 0 17 14"><path d="M4 11a3.5 3.5 0 0 1 0-7 4.5 4.5 0 0 1 8.5-1A3.5 3.5 0 0 1 13 10z" fill="#c8c8d8"/><circle cx="12" cy="9.5" r="4" fill="#8aa2c8" stroke="#dfe8f5" stroke-width="1"/></svg>
  <svg class="abs" style="left:1036px;top:15px" width="11" height="15" viewBox="0 0 11 15"><rect x="3" y="0.7" width="5" height="9" rx="2.5" fill="none" stroke="#8ec8f0" stroke-width="1.3"/><path d="M1 7a4.5 4.5 0 0 0 9 0M5.5 11.5V14.5" fill="none" stroke="#8ec8f0" stroke-width="1.3"/></svg>
  <div class="abs" style="left:1066px;top:11px;width:22px;text-align:center;font-size:10px;line-height:14px;color:#e8e8f0">ESP<br>LAA</div>
  <svg class="abs" style="left:1104px;top:16px" width="16" height="12" viewBox="0 0 16 12"><path d="M1 4.5a10 10 0 0 1 14 0M3.3 6.8a7 7 0 0 1 9.4 0M5.6 9a4 4 0 0 1 4.8 0" fill="none" stroke="#e8e8f0" stroke-width="1.3"/><circle cx="8" cy="11" r="1" fill="#e8e8f0"/></svg>
  <svg class="abs" style="left:1127px;top:15px" width="16" height="14" viewBox="0 0 16 14"><path d="M1 4.5h3l4-3.5v12l-4-3.5H1z" fill="none" stroke="#e8e8f0" stroke-width="1.2"/><path d="M9.8 5a2.5 2.5 0 0 1 0 4M11.8 3.2a5.2 5.2 0 0 1 0 7.6M13.8 1.5a7.8 7.8 0 0 1 0 11" fill="none" stroke="#e8e8f0" stroke-width="1.2"/></svg>
  <svg class="abs" style="left:1150px;top:17px" width="15" height="10" viewBox="0 0 15 10"><rect x="0.6" y="0.6" width="12" height="8.8" rx="1.5" fill="none" stroke="#e8e8f0" stroke-width="1.2"/><rect x="2.2" y="2.2" width="4.5" height="5.6" fill="#e8e8f0"/><rect x="13.2" y="3.3" width="1.5" height="3.4" fill="#e8e8f0"/></svg>
  <div class="abs" style="left:1170px;top:8.5px;width:65.5px;text-align:right;font-size:11.1px;line-height:15px;color:#e8e8f0">17:41<br>19/09/2022</div>
  <svg class="abs" style="left:1247px;top:15px" width="15" height="15" viewBox="0 0 15 15"><path d="M7 1.2A6.3 6.3 0 1 1 1.5 12.2A5.2 5.2 0 0 0 7 1.2z" fill="none" stroke="#e8e8f0" stroke-width="1.2"/></svg>

</div>
</body></html>
